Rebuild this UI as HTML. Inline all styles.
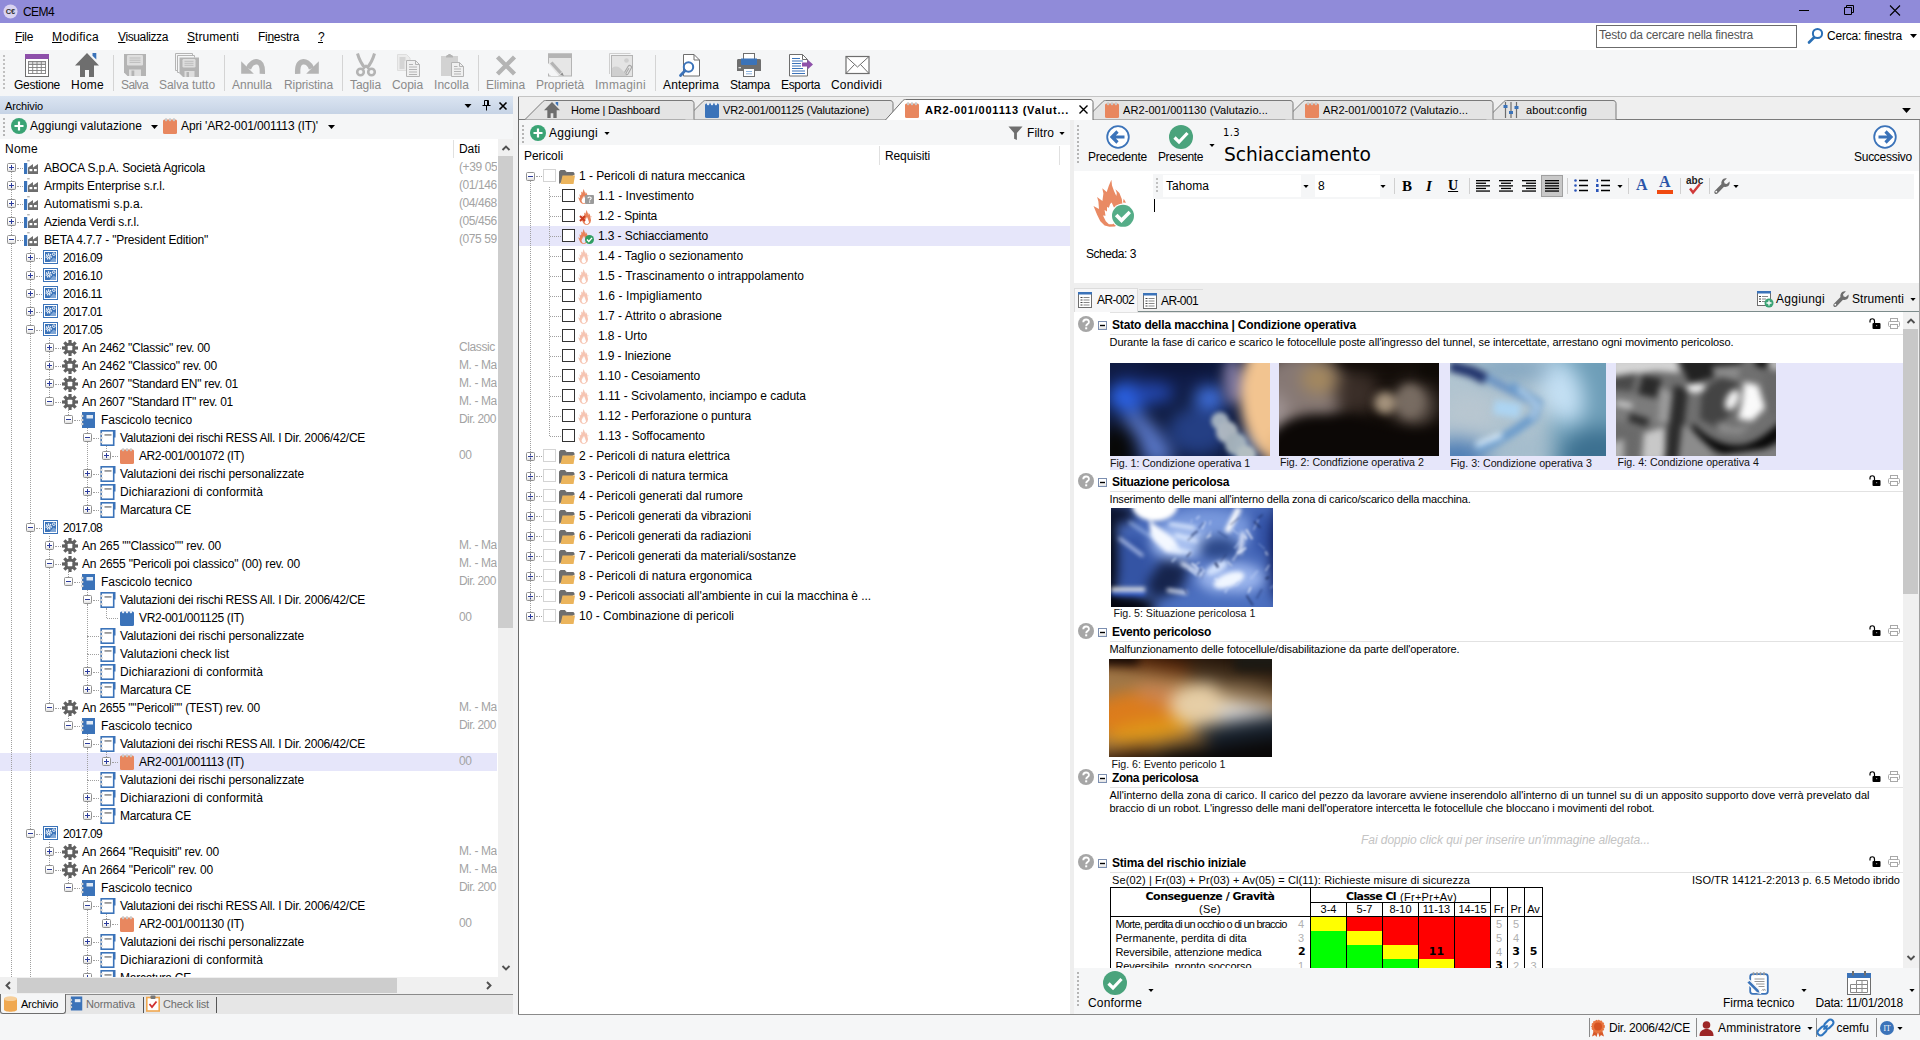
<!DOCTYPE html>
<html lang="it"><head><meta charset="utf-8"><title>CEM4</title><style>
html,body{margin:0;padding:0;}
body{width:1920px;height:1040px;overflow:hidden;background:#f5f6f7;font-family:"Liberation Sans",sans-serif;font-size:12px;color:#000;position:relative;}
.t{position:absolute;white-space:nowrap;overflow:visible;}
.b{position:absolute;}
svg{position:absolute;overflow:visible;}
u{text-decoration:underline;}
</style></head><body>
<svg width="0" height="0" style="position:absolute"><defs><filter id="bl1" x="-50%" y="-50%" width="200%" height="200%" color-interpolation-filters="sRGB"><feGaussianBlur stdDeviation="1"/></filter><filter id="bl2" x="-50%" y="-50%" width="200%" height="200%" color-interpolation-filters="sRGB"><feGaussianBlur stdDeviation="2"/></filter><filter id="bl3" x="-50%" y="-50%" width="200%" height="200%" color-interpolation-filters="sRGB"><feGaussianBlur stdDeviation="3"/></filter><filter id="bl4" x="-50%" y="-50%" width="200%" height="200%" color-interpolation-filters="sRGB"><feGaussianBlur stdDeviation="4"/></filter><filter id="bl5" x="-50%" y="-50%" width="200%" height="200%" color-interpolation-filters="sRGB"><feGaussianBlur stdDeviation="5"/></filter><filter id="bl6" x="-50%" y="-50%" width="200%" height="200%" color-interpolation-filters="sRGB"><feGaussianBlur stdDeviation="6"/></filter><filter id="bl8" x="-50%" y="-50%" width="200%" height="200%" color-interpolation-filters="sRGB"><feGaussianBlur stdDeviation="8"/></filter><filter id="bl10" x="-50%" y="-50%" width="200%" height="200%" color-interpolation-filters="sRGB"><feGaussianBlur stdDeviation="10"/></filter><filter id="bl14" x="-50%" y="-50%" width="200%" height="200%" color-interpolation-filters="sRGB"><feGaussianBlur stdDeviation="14"/></filter><linearGradient id="gex" x1="0" y1="0" x2="0" y2="1"><stop offset="0" stop-color="#fff"/><stop offset="0.5" stop-color="#fff"/><stop offset="1" stop-color="#dcdcdc"/></linearGradient><symbol id="plus" viewBox="0 0 9 9"><rect x="0.5" y="0.5" width="8" height="8" rx="1" fill="url(#gex)" stroke="#919191"/><path d="M2 4.5h5M4.5 2v5" stroke="#2b3b9c" stroke-width="1"/></symbol><symbol id="minus" viewBox="0 0 9 9"><rect x="0.5" y="0.5" width="8" height="8" rx="1" fill="url(#gex)" stroke="#919191"/><path d="M2 4.5h5" stroke="#2b3b9c" stroke-width="1"/></symbol><symbol id="factory" viewBox="0 0 16 16"><path d="M3.200 0.800h2.500" stroke="#888" stroke-width="0.900"/><rect x="0" y="3" width="3.200" height="11" fill="#3b73b9"/><path d="M4 14V7.500l5-3.500v3.500l5-3.500V14z" fill="#6e6e6e"/><rect x="5.500" y="9" width="2.800" height="2.200" fill="#fff"/><rect x="10" y="9" width="2.800" height="2.200" fill="#fff"/></symbol><symbol id="gimg" viewBox="0 0 16 16"><rect x="0.500" y="0.500" width="14" height="13" fill="#fff" stroke="#3b73b9"/><rect x="2" y="2" width="11" height="10" fill="#3b73b9"/><circle cx="5.700" cy="6.500" r="2.400" fill="none" stroke="#fff" stroke-width="1.500" stroke-dasharray="1.100 0.800"/><circle cx="5.700" cy="6.500" r="1.500" fill="#fff"/><circle cx="5.700" cy="6.500" r="0.700" fill="#3b73b9"/><circle cx="10.800" cy="4.200" r="1.300" fill="none" stroke="#fff" stroke-width="0.900"/><path d="M6.500 12l4-4.500 2.500 1.500v3z" fill="#7fa6d6"/></symbol><symbol id="gear" viewBox="0 0 16 16"><g fill="#606060"><circle cx="8" cy="8" r="5.600"/><rect x="6.400" y="0" width="3.200" height="4" transform="rotate(0 8 8)"/><rect x="6.400" y="0" width="3.200" height="4" transform="rotate(45 8 8)"/><rect x="6.400" y="0" width="3.200" height="4" transform="rotate(90 8 8)"/><rect x="6.400" y="0" width="3.200" height="4" transform="rotate(135 8 8)"/><rect x="6.400" y="0" width="3.200" height="4" transform="rotate(180 8 8)"/><rect x="6.400" y="0" width="3.200" height="4" transform="rotate(225 8 8)"/><rect x="6.400" y="0" width="3.200" height="4" transform="rotate(270 8 8)"/><rect x="6.400" y="0" width="3.200" height="4" transform="rotate(315 8 8)"/></g><rect x="5.700" y="5.700" width="4.600" height="4.600" rx="0.600" fill="#fff"/></symbol><symbol id="book" viewBox="0 0 16 16"><rect x="1" y="0" width="13" height="16" fill="#3b73b9"/><rect x="5.500" y="3" width="6.500" height="3.500" fill="#dfe9f5"/><circle cx="1.300" cy="4" r="1.100" fill="#fff" stroke="#999" stroke-width="0.500"/><circle cx="1.300" cy="8" r="1.100" fill="#fff" stroke="#999" stroke-width="0.500"/><circle cx="1.300" cy="12" r="1.100" fill="#fff" stroke="#999" stroke-width="0.500"/></symbol><symbol id="nb" viewBox="0 0 16 16"><rect x="1.200" y="0.800" width="12.500" height="14.400" fill="#fff" stroke="#3b73b9" stroke-width="1.600"/><rect x="13.500" y="0" width="2" height="7.500" fill="#3b73b9"/><rect x="4.500" y="4" width="7" height="1.800" fill="#9a9a9a"/><circle cx="1.200" cy="4" r="1.100" fill="#fff" stroke="#999" stroke-width="0.500"/><circle cx="1.200" cy="8" r="1.100" fill="#fff" stroke="#999" stroke-width="0.500"/><circle cx="1.200" cy="12" r="1.100" fill="#fff" stroke="#999" stroke-width="0.500"/></symbol><symbol id="npo" viewBox="0 0 14 16"><rect x="0" y="1.500" width="14" height="14.500" rx="1.500" fill="#e8875f"/><rect x="2" y="0.300" width="2.200" height="3" rx="0.800" fill="#c9c9c9"/><rect x="5.900" y="0.300" width="2.200" height="3" rx="0.800" fill="#c9c9c9"/><rect x="9.800" y="0.300" width="2.200" height="3" rx="0.800" fill="#c9c9c9"/></symbol><symbol id="npb" viewBox="0 0 14 16"><rect x="0" y="1.500" width="14" height="14.500" rx="1.500" fill="#3b73b9"/><rect x="2" y="0.300" width="2.200" height="3" rx="0.800" fill="#e8eef6"/><rect x="5.900" y="0.300" width="2.200" height="3" rx="0.800" fill="#e8eef6"/><rect x="9.800" y="0.300" width="2.200" height="3" rx="0.800" fill="#e8eef6"/></symbol><symbol id="gplus" viewBox="0 0 16 16"><circle cx="8" cy="8" r="8" fill="#3aa374"/><path d="M3.500 8h9M8 3.500v9" stroke="#fff" stroke-width="2.200"/></symbol><symbol id="dd" viewBox="0 0 7 4"><path d="M0 0h7L3.500 4z" fill="#000"/></symbol><symbol id="folder" viewBox="0 0 16 14"><path d="M0.500 13.500V2c0-1 0.500-1.500 1.500-1.500h4l1.500 2h6.500c0.700 0 1 0.400 1 1V5" fill="#6e6e6e" stroke="#6e6e6e"/><path d="M3.500 5.500h12.500l-1.500 8.500h-13z" fill="#ebb45c"/></symbol><symbol id="flame" viewBox="0 0 40 50"><path fill-rule="evenodd" fill="currentColor" d="M21.400 1.700L22 7.500L24 13L26.300 18L26.800 15L25.400 11.200L29.400 14.900L31.800 21L32.500 27L34 34L32 42L25 48.400L19.500 48.700L14.600 47.500L10.300 43.200L7.200 37L3.500 28.100L9 31L8.400 23.500L7.100 18.900L12.400 22.900L13.400 15.500L12.300 10.300L16.700 14L18.900 7.500ZM21.700 24.400L20.100 26L18.900 29.700L17 29L17 33.400L14.600 32L15.500 37.700L13 37.400L15.800 43.200L18.900 46.300L22.600 46.300L28 41L25 32Z"/><path fill="currentColor" d="M33.700 20.700L36 24.700L33 24.400Z"/></symbol><symbol id="bq" viewBox="0 0 9 9"><rect x="0" y="0" width="9" height="9" rx="1" fill="#9a9a9a"/><path d="M3 3.200c0-1.600 3.200-1.600 3.200 0 0 1.200-1.600 1.100-1.600 2.300" stroke="#fff" stroke-width="1.100" fill="none"/><rect x="4" y="6.400" width="1.200" height="1.200" fill="#fff"/></symbol><symbol id="bx" viewBox="0 0 7 7"><path d="M1 1l5 5M6 1l-5 5" stroke="#cc3b1e" stroke-width="2"/></symbol><symbol id="bok" viewBox="0 0 9 9"><circle cx="4.500" cy="4.500" r="4.500" fill="#2f9e62"/><path d="M2 4.600l1.800 1.900 3.200-3.600" stroke="#fff" stroke-width="1.400" fill="none"/></symbol><symbol id="funnel" viewBox="0 0 16 16"><path d="M0.500 1h15l-6 7v7.500l-3-1.500v-6z" fill="#6e6e6e"/></symbol><symbol id="qm" viewBox="0 0 16 16"><circle cx="8" cy="8" r="8" fill="#a6a6a6"/><path d="M5.300 6.200c0-3.600 5.600-3.600 5.600-0.200 0 2.200-2.700 2-2.700 4.200" stroke="#fff" stroke-width="1.900" fill="none"/><rect x="7.200" y="11.300" width="2" height="2" fill="#fff"/></symbol><symbol id="sminus" viewBox="0 0 9 9"><rect x="0.500" y="0.500" width="8" height="8" fill="url(#gex)" stroke="#7b8eb0"/><path d="M2 4.500h5" stroke="#000" stroke-width="1.400"/></symbol><symbol id="lock" viewBox="0 0 12 11"><path d="M1 4.500V3c0-3 4.500-3 4.500 0v2.500" stroke="#000" stroke-width="1.200" fill="none"/><rect x="3.500" y="5" width="8" height="6" rx="1" fill="#000"/><rect x="7" y="7" width="1.200" height="1.200" fill="#888"/></symbol><symbol id="prn" viewBox="0 0 12 11"><rect x="2.500" y="0.500" width="7" height="3" fill="#fff" stroke="#a8a8a8"/><rect x="0.500" y="3.500" width="11" height="5" rx="1" fill="#fff" stroke="#a8a8a8"/><rect x="2.500" y="6.500" width="7" height="4" fill="#fff" stroke="#a8a8a8"/></symbol><symbol id="tabic" viewBox="0 0 14 16"><rect x="0.500" y="0.500" width="13" height="15" fill="#fff" stroke="#6e6e6e"/><rect x="0" y="0" width="14" height="2.500" fill="#3b73b9"/><path d="M2.500 5.500h2M2.500 8h2M2.500 10.500h2M2.500 13h2" stroke="#444" stroke-width="1.200"/><path d="M5.500 5.500h6M5.500 8h6M5.500 10.500h6M5.500 13h6" stroke="#888" stroke-width="1.200"/></symbol><symbol id="wrench" viewBox="0 0 16 16"><path d="M15.500 3.500c0.500 2-0.300 4-2.300 5-1 0.500-2.200 0.500-3.200 0.200L3.500 15.500c-0.800 0.700-2 0.700-2.700-0.100-0.700-0.800-0.600-1.900 0.100-2.600L7.500 6c-0.400-1.200-0.200-2.500 0.500-3.600C9 0.800 11 0 12.800 0.500L10 3.300l0.600 2.200 2.200 0.600z" fill="#6e6e6e"/><circle cx="2.300" cy="13.700" r="0.900" fill="#fff"/></symbol><symbol id="chk24" viewBox="0 0 24 24"><circle cx="12" cy="12" r="12" fill="#4aa37c"/><path d="M5.500 12.500l4.500 4.500 8.500-9" stroke="#fff" stroke-width="3.200" fill="none"/></symbol><symbol id="prev" viewBox="0 0 24 24"><circle cx="12" cy="12" r="10.800" fill="#fff" stroke="#3b73b9" stroke-width="1.800"/><path d="M18.500 12H7M11.500 6.500L6 12l5.500 5.500" stroke="#3b73b9" stroke-width="3.200" fill="none"/></symbol><symbol id="next" viewBox="0 0 24 24"><circle cx="12" cy="12" r="10.800" fill="#fff" stroke="#3b73b9" stroke-width="1.800"/><path d="M5.500 12H17M12.500 6.500L18 12l-5.500 5.500" stroke="#3b73b9" stroke-width="3.200" fill="none"/></symbol></defs></svg>
<div class="b" style="left:0px;top:0px;width:1920px;height:23px;background:#908bd9;"></div>
<svg style="left:3px;top:4px" width="15" height="15" viewBox="0 0 16 16"><circle cx="8" cy="8" r="7.5" fill="#d9d3f0"/><text x="8" y="11" font-size="8" font-weight="bold" text-anchor="middle" fill="#333" font-family="Liberation Sans, sans-serif">C€</text></svg>
<div class="t" style="left:23px;top:4px;height:16px;line-height:16px;font-size:12px;color:#000;letter-spacing:-0.585px;">CEM4</div>
<svg style="left:1798px;top:5px" width="110" height="14" viewBox="0 0 110 14"><path d="M1 5.5h10" stroke="#000" stroke-width="1" fill="none"/><path d="M46.5 2.5h7v7h-7zM48.500 2.500v-2h7v7h-2" stroke="#000" fill="none"/><path d="M92 0.5l10 10M102 0.5l-10 10" stroke="#000" stroke-width="1.1" fill="none"/></svg>
<div class="b" style="left:0px;top:23px;width:1920px;height:27px;background:#fff;"></div>
<div class="t" style="left:15px;top:29px;height:17px;line-height:17px;font-size:12px;color:#000;letter-spacing:-0.334px;"><u>F</u>ile</div>
<div class="t" style="left:52px;top:29px;height:17px;line-height:17px;font-size:12px;color:#000;letter-spacing:0.290px;"><u>M</u>odifica</div>
<div class="t" style="left:118px;top:29px;height:17px;line-height:17px;font-size:12px;color:#000;letter-spacing:-0.381px;"><u>V</u>isualizza</div>
<div class="t" style="left:187px;top:29px;height:17px;line-height:17px;font-size:12px;color:#000;letter-spacing:0.072px;"><u>S</u>trumenti</div>
<div class="t" style="left:258px;top:29px;height:17px;line-height:17px;font-size:12px;color:#000;letter-spacing:-0.293px;">Fi<u>n</u>estra</div>
<div class="t" style="left:318px;top:29px;height:17px;line-height:17px;font-size:12px;color:#000;letter-spacing:-1.674px;"><u>?</u></div>
<div class="b" style="left:1596px;top:25px;width:199px;height:21px;background:#fff;border:1px solid #6b6b6b;"></div>
<div class="t" style="left:1599px;top:27px;height:16px;line-height:16px;font-size:12px;color:#555;letter-spacing:-0.196px;">Testo da cercare nella finestra</div>
<svg style="left:1807px;top:27px" width="18" height="18" viewBox="0 0 18 18"><circle cx="10.5" cy="6.5" r="4.6" fill="none" stroke="#2a6fb5" stroke-width="2"/><path d="M7 10.5L2 15.5" stroke="#2a6fb5" stroke-width="2.6" stroke-linecap="round"/></svg>
<div class="t" style="left:1827px;top:28px;height:17px;line-height:17px;font-size:12px;color:#000;letter-spacing:-0.202px;">Cerca: finestra</div>
<svg style="left:1910px;top:34px" width="7" height="4" viewBox="0 0 7 4"><path d="M0 0h7L3.5 4z" fill="#000"/></svg>
<div class="b" style="left:0px;top:50px;width:1920px;height:46px;background:#f5f6f7;"></div>
<svg style="left:3px;top:54px" width="3" height="38" viewBox="0 0 3 38"><path d="M1 1v36" stroke="#c0c0c0" stroke-width="2" stroke-dasharray="2 2"/></svg>
<div class="t" style="left:14px;top:77px;height:16px;line-height:16px;font-size:12px;color:#000;letter-spacing:-0.254px;">Gestione</div>
<div class="t" style="left:71px;top:77px;height:16px;line-height:16px;font-size:12px;color:#000;letter-spacing:0.248px;">Home</div>
<div class="t" style="left:121px;top:77px;height:16px;line-height:16px;font-size:12px;color:#8a8a8a;letter-spacing:-0.604px;">Salva</div>
<div class="t" style="left:159px;top:77px;height:16px;line-height:16px;font-size:12px;color:#8a8a8a;letter-spacing:-0.064px;">Salva tutto</div>
<div class="t" style="left:232px;top:77px;height:16px;line-height:16px;font-size:12px;color:#8a8a8a;letter-spacing:-0.005px;">Annulla</div>
<div class="t" style="left:284px;top:77px;height:16px;line-height:16px;font-size:12px;color:#8a8a8a;letter-spacing:-0.102px;">Ripristina</div>
<div class="t" style="left:350px;top:77px;height:16px;line-height:16px;font-size:12px;color:#8a8a8a;letter-spacing:-0.059px;">Taglia</div>
<div class="t" style="left:392px;top:77px;height:16px;line-height:16px;font-size:12px;color:#8a8a8a;letter-spacing:-0.071px;">Copia</div>
<div class="t" style="left:434px;top:77px;height:16px;line-height:16px;font-size:12px;color:#8a8a8a;letter-spacing:0.045px;">Incolla</div>
<div class="t" style="left:486px;top:77px;height:16px;line-height:16px;font-size:12px;color:#8a8a8a;letter-spacing:-0.049px;">Elimina</div>
<div class="t" style="left:536px;top:77px;height:16px;line-height:16px;font-size:12px;color:#8a8a8a;letter-spacing:-0.077px;">Proprietà</div>
<div class="t" style="left:595px;top:77px;height:16px;line-height:16px;font-size:12px;color:#8a8a8a;letter-spacing:0.290px;">Immagini</div>
<div class="t" style="left:663px;top:77px;height:16px;line-height:16px;font-size:12px;color:#000;letter-spacing:0.145px;">Anteprima</div>
<div class="t" style="left:730px;top:77px;height:16px;line-height:16px;font-size:12px;color:#000;letter-spacing:-0.226px;">Stampa</div>
<div class="t" style="left:781px;top:77px;height:16px;line-height:16px;font-size:12px;color:#000;letter-spacing:-0.337px;">Esporta</div>
<div class="t" style="left:831px;top:77px;height:16px;line-height:16px;font-size:12px;color:#000;letter-spacing:0.182px;">Condividi</div>
<svg style="left:25px;top:53px" width="24" height="24" viewBox="0 0 24 24"><rect x="0.500" y="1.500" width="23" height="22" fill="#fff" stroke="#6e6e6e"/><rect x="0" y="1" width="24" height="5" fill="#8e50aa"/><rect x="3" y="8" width="18" height="13" fill="#808080"/><rect x="3.900" y="8.900" width="3.375" height="2.125" fill="#d8d8d8"/><rect x="8.175" y="8.900" width="3.375" height="2.125" fill="#d8d8d8"/><rect x="12.450" y="8.900" width="3.375" height="2.125" fill="#d8d8d8"/><rect x="16.725" y="8.900" width="3.375" height="2.125" fill="#d8d8d8"/><rect x="3.900" y="11.925" width="3.375" height="2.125" fill="#fff"/><rect x="8.175" y="11.925" width="3.375" height="2.125" fill="#fff"/><rect x="12.450" y="11.925" width="3.375" height="2.125" fill="#fff"/><rect x="16.725" y="11.925" width="3.375" height="2.125" fill="#fff"/><rect x="3.900" y="14.950" width="3.375" height="2.125" fill="#fff"/><rect x="8.175" y="14.950" width="3.375" height="2.125" fill="#fff"/><rect x="12.450" y="14.950" width="3.375" height="2.125" fill="#fff"/><rect x="16.725" y="14.950" width="3.375" height="2.125" fill="#fff"/><rect x="3.900" y="17.975" width="3.375" height="2.125" fill="#fff"/><rect x="8.175" y="17.975" width="3.375" height="2.125" fill="#fff"/><rect x="12.450" y="17.975" width="3.375" height="2.125" fill="#fff"/><rect x="16.725" y="17.975" width="3.375" height="2.125" fill="#fff"/></svg>
<svg style="left:75px;top:53px" width="24" height="24" viewBox="0 0 24 24"><path d="M17.5 0h3.8v6.5l-3.8-3.8z" fill="#3b73b9"/><path d="M12 0L0 12.5h5V24h5v-7h4v7h5V12.5h5z" fill="#6e6e6e"/></svg>
<svg style="left:123px;top:53px" width="24" height="24" viewBox="0 0 24 24"><path d="M1 1h22v22H4.5L1 19.5z" fill="#b4b4b4"/><rect x="4" y="2" width="16" height="10.5" rx="1.2" fill="#dedede"/><path d="M6.5 5h11M6.5 7.2h11M6.5 9.4h11" stroke="#b4b4b4" stroke-width="0.8"/><rect x="6" y="16.5" width="12" height="6.5" fill="#dedede"/><rect x="8.5" y="17.5" width="2.8" height="5.5" fill="#b4b4b4"/></svg>
<svg style="left:175px;top:53px" width="24" height="24" viewBox="0 0 24 24"><path d="M0.5 0.5h17v2M2.5 2.5h17v2" fill="none" stroke="#b4b4b4" stroke-width="1"/><path d="M0.5 0.5v17h2M2.5 2.5v17h2" fill="none" stroke="#b4b4b4" stroke-width="1"/><path d="M4.5 4.5h19.5v19.5H8L4.5 20.5z" fill="#b4b4b4"/><rect x="7.5" y="6" width="13" height="8.5" rx="1.2" fill="#dedede"/><path d="M9.5 8.3h9M9.5 10.3h9M9.5 12.3h9" stroke="#b4b4b4" stroke-width="0.8"/><rect x="9.5" y="18" width="10" height="6" fill="#dedede"/><rect x="11.5" y="19" width="2.5" height="5" fill="#b4b4b4"/></svg>
<svg style="left:240px;top:53px" width="24" height="24" viewBox="0 0 24 24"><path d="M1.200 8.200v12.600h12.600z" fill="#b4b4b4"/><path d="M8.500 15.500C10.500 10 14.500 8.300 17.500 8.800c3.600 0.600 5.200 4.600 4.800 12" stroke="#b4b4b4" stroke-width="5.400" fill="none"/></svg>
<svg style="left:296px;top:53px" width="24" height="24" viewBox="0 0 24 24"><g transform="translate(24 0) scale(-1 1)"><path d="M1.200 8.200v12.600h12.600z" fill="#b4b4b4"/><path d="M8.500 15.500C10.500 10 14.500 8.300 17.500 8.800c3.600 0.600 5.200 4.600 4.800 12" stroke="#b4b4b4" stroke-width="5.400" fill="none"/></g></svg>
<svg style="left:354px;top:53px" width="24" height="24" viewBox="0 0 24 24"><path d="M3.5 0.500C5 6 8 11.500 11 15M20.500 0.500C19 6 16 11.500 13 15" stroke="#b4b4b4" stroke-width="3" fill="none"/><circle cx="6.500" cy="19" r="3.300" fill="none" stroke="#b4b4b4" stroke-width="2.600"/><circle cx="17.500" cy="19" r="3.300" fill="none" stroke="#b4b4b4" stroke-width="2.600"/><path d="M8.500 16.500L12 13l3.500 3.500" stroke="#b4b4b4" stroke-width="2.400" fill="none"/></svg>
<svg style="left:396px;top:53px" width="24" height="24" viewBox="0 0 24 24"><path d="M1.500 1.500h9l3.500 3.500v12.500h-12.500z" fill="#ececec" stroke="#dedede"/><path d="M3.500 5h6M3.500 7h6M3.500 9h5M3.500 11h5M3.500 13h5M3.500 15h5" stroke="#b4b4b4" stroke-width="0.800"/><path d="M10.500 7.500h9l4 4v12h-13z" fill="#f0f0f0" stroke="#b4b4b4"/><path d="M19.500 7.500v4h4" fill="none" stroke="#b4b4b4"/><path d="M13 11.500h4M13 14h8M13 16.500h8M13 19h8M13 21.500h8" stroke="#b4b4b4" stroke-width="1"/></svg>
<svg style="left:440px;top:53px" width="24" height="24" viewBox="0 0 24 24"><path d="M1 3h17v20H1z" fill="#d2d2d2"/><path d="M6 3.500c0-1 1-1.500 2-1.500 0-1.200 3-1.200 3 0 1 0 2 0.500 2 1.500v1H6z" fill="#b4b4b4"/><path d="M11.500 9.500h8l4 4v10h-12z" fill="#f0f0f0" stroke="#b4b4b4"/><path d="M19.500 9.500v4h4" fill="none" stroke="#b4b4b4"/><path d="M14 13.500h3.500M14 16h7M14 18.500h7M14 21h7" stroke="#b4b4b4" stroke-width="1"/></svg>
<svg style="left:494px;top:53px" width="24" height="24" viewBox="0 0 24 24"><path d="M3.500 4l17 17M20.500 4L3.500 21" stroke="#b4b4b4" stroke-width="4.400"/></svg>
<svg style="left:548px;top:53px" width="24" height="24" viewBox="0 0 24 24"><rect x="0.500" y="1" width="23" height="22" fill="#e6e6e6" stroke="#b4b4b4"/><rect x="0" y="0.500" width="24" height="4.500" fill="#b4b4b4"/><path d="M0 10l11 13H3l-3-3z" fill="#f5f6f7"/><path d="M2 10.500l2.500-2 9.500 10.500-2.500 2z" fill="#b4b4b4"/><path d="M12 21.500l2.500-2 1.300 3.600z" fill="#8c8c8c"/></svg>
<svg style="left:609px;top:53px" width="24" height="24" viewBox="0 0 24 24"><path d="M0.500 21v-20.500h21" fill="none" stroke="#cfcfcf"/><rect x="2.500" y="2.500" width="21" height="21" fill="#e4e4e4" stroke="#b4b4b4"/><circle cx="17.500" cy="7.500" r="2.300" fill="#cfcfcf"/><path d="M3 15c4-3 8-1 11 3 2 2 4 3 4 5H3z" fill="#cfcfcf"/><path d="M15.500 19.500l3.500-6c1.500-2.300 4.500-0.500 3.200 1.800l-3.200 5.700c-0.800 1.200-2.600 0.300-1.900-1l2.800-4.800" fill="none" stroke="#a8a8a8" stroke-width="1.100"/></svg>
<svg style="left:679px;top:53px" width="24" height="24" viewBox="0 0 24 24"><path d="M4.500 1.500h10.500l5.500 5.500v16h-16z" fill="#fff" stroke="#6e6e6e"/><path d="M15 1.500v5.500h5.500" fill="none" stroke="#6e6e6e"/><circle cx="9.500" cy="14" r="4.700" fill="#fff" stroke="#3b73b9" stroke-width="2"/><path d="M6 17.800L1.500 22.500" stroke="#3b73b9" stroke-width="2.800" stroke-linecap="round"/></svg>
<svg style="left:737px;top:53px" width="24" height="24" viewBox="0 0 24 24"><rect x="6.500" y="0.500" width="11" height="6" fill="#fff" stroke="#6e6e6e"/><path d="M0 7.500c0-1 0.500-1.500 1.500-1.500h21c1 0 1.500 0.500 1.500 1.500V18H0z" fill="#6e6e6e"/><path d="M4 5.500h16v5c0 1-0.500 1.500-1.500 1.500h-13c-1 0-1.500-0.500-1.500-1.500z" fill="#3b73b9"/><rect x="1.500" y="14" width="2.500" height="1.300" fill="#ddd"/><rect x="6.500" y="15.500" width="11" height="8" fill="#fff" stroke="#6e6e6e"/><path d="M9 18.500h6M9 20.800h6" stroke="#8db3dd" stroke-width="1"/></svg>
<svg style="left:789px;top:53px" width="24" height="24" viewBox="0 0 24 24"><path d="M0.500 1.500h13l5 5v16.500h-18z" fill="#fff" stroke="#6e6e6e"/><path d="M13.500 1.500v5h5" fill="none" stroke="#6e6e6e"/><path d="M3 5.500h8M3 8h11M3 10.500h9M3 13h9M3 15.500h11M3 18h13M3 20.500h13" stroke="#3b73b9" stroke-width="1.100"/><path d="M13 9.500h5.500V6.500L24 11.500l-5.500 5V13.500H13z" fill="#8e50aa"/></svg>
<svg style="left:845px;top:53px" width="24" height="24" viewBox="0 0 24 24"><rect x="1" y="3.500" width="23" height="17" fill="#fff" stroke="#6e6e6e" stroke-width="1.200"/><path d="M1 3.500l11.500 10.500L24 3.500M1 20.500l8.500-9M24 20.500l-8.500-9" fill="none" stroke="#6e6e6e" stroke-width="1"/></svg>
<div class="b" style="left:113px;top:55px;width:1px;height:36px;background:#d4d4d4;"></div>
<div class="b" style="left:224px;top:55px;width:1px;height:36px;background:#d4d4d4;"></div>
<div class="b" style="left:342px;top:55px;width:1px;height:36px;background:#d4d4d4;"></div>
<div class="b" style="left:478px;top:55px;width:1px;height:36px;background:#d4d4d4;"></div>
<div class="b" style="left:655px;top:55px;width:1px;height:36px;background:#d4d4d4;"></div>
<div class="b" style="left:0px;top:96px;width:513px;height:919px;background:#fff;"></div>
<div class="b" style="left:0px;top:96px;width:513px;height:18px;background:linear-gradient(#dbe5f2,#c6d3e5);"></div>
<div class="t" style="left:5px;top:98px;height:16px;line-height:16px;font-size:11px;color:#000;letter-spacing:-0.140px;">Archivio</div>
<svg style="left:464px;top:104px" width="8" height="4"><use href="#dd"/></svg>
<svg style="left:482px;top:100px" width="9" height="11" viewBox="0 0 9 11"><path d="M2.500 0.500h4v5h-4zM5.500 0.500v5M0.500 5.500h8M4.500 5.500v5" stroke="#000" fill="none"/></svg>
<svg style="left:499px;top:102px" width="8" height="8" viewBox="0 0 8 8"><path d="M0.500 0.500l7 7M7.500 0.500l-7 7" stroke="#000" stroke-width="1.600" fill="none"/></svg>
<div class="b" style="left:0px;top:114px;width:513px;height:25px;background:#f5f6f7;"></div>
<svg style="left:3px;top:118px" width="2" height="18" viewBox="0 0 2 18"><path d="M1 0v18" stroke="#b5b5b5" stroke-width="2" stroke-dasharray="2 2"/></svg>
<svg style="left:11px;top:118px" width="16" height="16"><use href="#gplus"/></svg>
<div class="t" style="left:30px;top:118px;height:17px;line-height:17px;font-size:12px;color:#000;letter-spacing:0.063px;">Aggiungi valutazione</div>
<svg style="left:151px;top:125px" width="7" height="4"><use href="#dd"/></svg>
<svg style="left:163px;top:118px" width="14" height="16"><use href="#npo"/></svg>
<div class="t" style="left:181px;top:118px;height:17px;line-height:17px;font-size:12px;color:#000;letter-spacing:-0.123px;">Apri 'AR2-001/001113 (IT)'</div>
<svg style="left:328px;top:125px" width="7" height="4"><use href="#dd"/></svg>
<div class="t" style="left:5px;top:141px;height:17px;line-height:17px;font-size:12px;color:#000;letter-spacing:0.248px;">Nome</div>
<div class="b" style="left:453px;top:140px;width:1px;height:18px;background:#e0e0e0;"></div>
<div class="t" style="left:459px;top:141px;height:17px;line-height:17px;font-size:12px;color:#000;letter-spacing:-0.085px;">Dati</div>
<div class="b" style="left:0;top:159px;width:497px;height:818px;overflow:hidden;"><div class="b" style="left:17px;top:9px;width:6px;height:1px;border-top:1px dotted #a0a0a0;"></div><svg style="left:7px;top:4px" width="9" height="9"><use href="#plus"/></svg><svg style="left:24px;top:1px" width="16" height="16"><use href="#factory"/></svg><div class="t" style="left:44px;top:0px;height:18px;line-height:18px;font-size:12px;color:#000;letter-spacing:-0.198px;">ABOCA S.p.A. Società Agricola</div><div class="t" style="left:459px;top:-1px;height:18px;line-height:18px;font-size:12px;color:#a3a3a3;letter-spacing:-0.410px;">(+39 05</div><div class="b" style="left:17px;top:27px;width:6px;height:1px;border-top:1px dotted #a0a0a0;"></div><svg style="left:7px;top:22px" width="9" height="9"><use href="#plus"/></svg><svg style="left:24px;top:19px" width="16" height="16"><use href="#factory"/></svg><div class="t" style="left:44px;top:18px;height:18px;line-height:18px;font-size:12px;color:#000;letter-spacing:-0.121px;">Armpits Enterprise s.r.l.</div><div class="t" style="left:459px;top:17px;height:18px;line-height:18px;font-size:12px;color:#a3a3a3;letter-spacing:-0.407px;">(01/146</div><div class="b" style="left:17px;top:45px;width:6px;height:1px;border-top:1px dotted #a0a0a0;"></div><svg style="left:7px;top:40px" width="9" height="9"><use href="#plus"/></svg><svg style="left:24px;top:37px" width="16" height="16"><use href="#factory"/></svg><div class="t" style="left:44px;top:36px;height:18px;line-height:18px;font-size:12px;color:#000;letter-spacing:0.017px;">Automatismi s.p.a.</div><div class="t" style="left:459px;top:35px;height:18px;line-height:18px;font-size:12px;color:#a3a3a3;letter-spacing:-0.407px;">(04/468</div><div class="b" style="left:17px;top:63px;width:6px;height:1px;border-top:1px dotted #a0a0a0;"></div><svg style="left:7px;top:58px" width="9" height="9"><use href="#plus"/></svg><svg style="left:24px;top:55px" width="16" height="16"><use href="#factory"/></svg><div class="t" style="left:44px;top:54px;height:18px;line-height:18px;font-size:12px;color:#000;letter-spacing:-0.219px;">Azienda Verdi s.r.l.</div><div class="t" style="left:459px;top:53px;height:18px;line-height:18px;font-size:12px;color:#a3a3a3;letter-spacing:-0.407px;">(05/456</div><div class="b" style="left:17px;top:81px;width:6px;height:1px;border-top:1px dotted #a0a0a0;"></div><svg style="left:7px;top:76px" width="9" height="9"><use href="#minus"/></svg><svg style="left:24px;top:73px" width="16" height="16"><use href="#factory"/></svg><div class="t" style="left:44px;top:72px;height:18px;line-height:18px;font-size:12px;color:#000;letter-spacing:-0.179px;">BETA 4.7.7 - "President Edition"</div><div class="t" style="left:459px;top:71px;height:18px;line-height:18px;font-size:12px;color:#a3a3a3;letter-spacing:-0.415px;">(075 599</div><div class="b" style="left:36px;top:99px;width:6px;height:1px;border-top:1px dotted #a0a0a0;"></div><svg style="left:26px;top:94px" width="9" height="9"><use href="#plus"/></svg><svg style="left:43px;top:91px" width="16" height="16"><use href="#gimg"/></svg><div class="t" style="left:63px;top:90px;height:18px;line-height:18px;font-size:12px;color:#000;letter-spacing:-0.625px;">2016.09</div><div class="b" style="left:36px;top:117px;width:6px;height:1px;border-top:1px dotted #a0a0a0;"></div><svg style="left:26px;top:112px" width="9" height="9"><use href="#plus"/></svg><svg style="left:43px;top:109px" width="16" height="16"><use href="#gimg"/></svg><div class="t" style="left:63px;top:108px;height:18px;line-height:18px;font-size:12px;color:#000;letter-spacing:-0.625px;">2016.10</div><div class="b" style="left:36px;top:135px;width:6px;height:1px;border-top:1px dotted #a0a0a0;"></div><svg style="left:26px;top:130px" width="9" height="9"><use href="#plus"/></svg><svg style="left:43px;top:127px" width="16" height="16"><use href="#gimg"/></svg><div class="t" style="left:63px;top:126px;height:18px;line-height:18px;font-size:12px;color:#000;letter-spacing:-0.498px;">2016.11</div><div class="b" style="left:36px;top:153px;width:6px;height:1px;border-top:1px dotted #a0a0a0;"></div><svg style="left:26px;top:148px" width="9" height="9"><use href="#plus"/></svg><svg style="left:43px;top:145px" width="16" height="16"><use href="#gimg"/></svg><div class="t" style="left:63px;top:144px;height:18px;line-height:18px;font-size:12px;color:#000;letter-spacing:-0.625px;">2017.01</div><div class="b" style="left:36px;top:171px;width:6px;height:1px;border-top:1px dotted #a0a0a0;"></div><svg style="left:26px;top:166px" width="9" height="9"><use href="#minus"/></svg><svg style="left:43px;top:163px" width="16" height="16"><use href="#gimg"/></svg><div class="t" style="left:63px;top:162px;height:18px;line-height:18px;font-size:12px;color:#000;letter-spacing:-0.625px;">2017.05</div><div class="b" style="left:55px;top:189px;width:6px;height:1px;border-top:1px dotted #a0a0a0;"></div><svg style="left:45px;top:184px" width="9" height="9"><use href="#plus"/></svg><svg style="left:62px;top:181px" width="16" height="16"><use href="#gear"/></svg><div class="t" style="left:82px;top:180px;height:18px;line-height:18px;font-size:12px;color:#000;letter-spacing:-0.254px;">An 2462 "Classic" rev. 00</div><div class="t" style="left:459px;top:179px;height:18px;line-height:18px;font-size:12px;color:#a3a3a3;letter-spacing:-0.387px;">Classic</div><div class="b" style="left:55px;top:207px;width:6px;height:1px;border-top:1px dotted #a0a0a0;"></div><svg style="left:45px;top:202px" width="9" height="9"><use href="#plus"/></svg><svg style="left:62px;top:199px" width="16" height="16"><use href="#gear"/></svg><div class="t" style="left:82px;top:198px;height:18px;line-height:18px;font-size:12px;color:#000;letter-spacing:-0.232px;">An 2462 "Classico" rev. 00</div><div class="t" style="left:459px;top:197px;height:18px;line-height:18px;font-size:12px;color:#a3a3a3;letter-spacing:-0.407px;">M. - Ma</div><div class="b" style="left:55px;top:225px;width:6px;height:1px;border-top:1px dotted #a0a0a0;"></div><svg style="left:45px;top:220px" width="9" height="9"><use href="#plus"/></svg><svg style="left:62px;top:217px" width="16" height="16"><use href="#gear"/></svg><div class="t" style="left:82px;top:216px;height:18px;line-height:18px;font-size:12px;color:#000;letter-spacing:-0.290px;">An 2607 "Standard EN" rev. 01</div><div class="t" style="left:459px;top:215px;height:18px;line-height:18px;font-size:12px;color:#a3a3a3;letter-spacing:-0.407px;">M. - Ma</div><div class="b" style="left:55px;top:243px;width:6px;height:1px;border-top:1px dotted #a0a0a0;"></div><svg style="left:45px;top:238px" width="9" height="9"><use href="#minus"/></svg><svg style="left:62px;top:235px" width="16" height="16"><use href="#gear"/></svg><div class="t" style="left:82px;top:234px;height:18px;line-height:18px;font-size:12px;color:#000;letter-spacing:-0.255px;">An 2607 "Standard IT" rev. 01</div><div class="t" style="left:459px;top:233px;height:18px;line-height:18px;font-size:12px;color:#a3a3a3;letter-spacing:-0.407px;">M. - Ma</div><div class="b" style="left:74px;top:261px;width:6px;height:1px;border-top:1px dotted #a0a0a0;"></div><svg style="left:64px;top:256px" width="9" height="9"><use href="#minus"/></svg><svg style="left:81px;top:253px" width="16" height="16"><use href="#book"/></svg><div class="t" style="left:101px;top:252px;height:18px;line-height:18px;font-size:12px;color:#000;letter-spacing:-0.061px;">Fascicolo tecnico</div><div class="t" style="left:459px;top:251px;height:18px;line-height:18px;font-size:12px;color:#a3a3a3;letter-spacing:-0.569px;">Dir. 200</div><div class="b" style="left:93px;top:279px;width:6px;height:1px;border-top:1px dotted #a0a0a0;"></div><svg style="left:83px;top:274px" width="9" height="9"><use href="#minus"/></svg><svg style="left:100px;top:271px" width="16" height="16"><use href="#nb"/></svg><div class="t" style="left:120px;top:270px;height:18px;line-height:18px;font-size:12px;color:#000;letter-spacing:-0.271px;">Valutazioni dei rischi RESS All. I Dir. 2006/42/CE</div><div class="b" style="left:112px;top:297px;width:6px;height:1px;border-top:1px dotted #a0a0a0;"></div><svg style="left:102px;top:292px" width="9" height="9"><use href="#plus"/></svg><svg style="left:120px;top:289px" width="14" height="16"><use href="#npo"/></svg><div class="t" style="left:139px;top:288px;height:18px;line-height:18px;font-size:12px;color:#000;letter-spacing:-0.407px;">AR2-001/001072 (IT)</div><div class="t" style="left:459px;top:287px;height:18px;line-height:18px;font-size:12px;color:#a3a3a3;letter-spacing:-0.467px;">00</div><div class="b" style="left:93px;top:315px;width:6px;height:1px;border-top:1px dotted #a0a0a0;"></div><svg style="left:83px;top:310px" width="9" height="9"><use href="#plus"/></svg><svg style="left:100px;top:307px" width="16" height="16"><use href="#nb"/></svg><div class="t" style="left:120px;top:306px;height:18px;line-height:18px;font-size:12px;color:#000;letter-spacing:-0.141px;">Valutazioni dei rischi personalizzate</div><div class="b" style="left:93px;top:333px;width:6px;height:1px;border-top:1px dotted #a0a0a0;"></div><svg style="left:83px;top:328px" width="9" height="9"><use href="#plus"/></svg><svg style="left:100px;top:325px" width="16" height="16"><use href="#nb"/></svg><div class="t" style="left:120px;top:324px;height:18px;line-height:18px;font-size:12px;color:#000;letter-spacing:0.084px;">Dichiarazioni di conformità</div><div class="b" style="left:93px;top:351px;width:6px;height:1px;border-top:1px dotted #a0a0a0;"></div><svg style="left:83px;top:346px" width="9" height="9"><use href="#plus"/></svg><svg style="left:100px;top:343px" width="16" height="16"><use href="#nb"/></svg><div class="t" style="left:120px;top:342px;height:18px;line-height:18px;font-size:12px;color:#000;letter-spacing:-0.252px;">Marcatura CE</div><div class="b" style="left:36px;top:369px;width:6px;height:1px;border-top:1px dotted #a0a0a0;"></div><svg style="left:26px;top:364px" width="9" height="9"><use href="#minus"/></svg><svg style="left:43px;top:361px" width="16" height="16"><use href="#gimg"/></svg><div class="t" style="left:63px;top:360px;height:18px;line-height:18px;font-size:12px;color:#000;letter-spacing:-0.625px;">2017.08</div><div class="b" style="left:55px;top:387px;width:6px;height:1px;border-top:1px dotted #a0a0a0;"></div><svg style="left:45px;top:382px" width="9" height="9"><use href="#plus"/></svg><svg style="left:62px;top:379px" width="16" height="16"><use href="#gear"/></svg><div class="t" style="left:82px;top:378px;height:18px;line-height:18px;font-size:12px;color:#000;letter-spacing:-0.144px;">An 265 ""Classico"" rev. 00</div><div class="t" style="left:459px;top:377px;height:18px;line-height:18px;font-size:12px;color:#a3a3a3;letter-spacing:-0.407px;">M. - Ma</div><div class="b" style="left:55px;top:405px;width:6px;height:1px;border-top:1px dotted #a0a0a0;"></div><svg style="left:45px;top:400px" width="9" height="9"><use href="#minus"/></svg><svg style="left:62px;top:397px" width="16" height="16"><use href="#gear"/></svg><div class="t" style="left:82px;top:396px;height:18px;line-height:18px;font-size:12px;color:#000;letter-spacing:-0.161px;">An 2655 "Pericoli poi classico" (00) rev. 00</div><div class="t" style="left:459px;top:395px;height:18px;line-height:18px;font-size:12px;color:#a3a3a3;letter-spacing:-0.407px;">M. - Ma</div><div class="b" style="left:74px;top:423px;width:6px;height:1px;border-top:1px dotted #a0a0a0;"></div><svg style="left:64px;top:418px" width="9" height="9"><use href="#minus"/></svg><svg style="left:81px;top:415px" width="16" height="16"><use href="#book"/></svg><div class="t" style="left:101px;top:414px;height:18px;line-height:18px;font-size:12px;color:#000;letter-spacing:-0.061px;">Fascicolo tecnico</div><div class="t" style="left:459px;top:413px;height:18px;line-height:18px;font-size:12px;color:#a3a3a3;letter-spacing:-0.569px;">Dir. 200</div><div class="b" style="left:93px;top:441px;width:6px;height:1px;border-top:1px dotted #a0a0a0;"></div><svg style="left:83px;top:436px" width="9" height="9"><use href="#minus"/></svg><svg style="left:100px;top:433px" width="16" height="16"><use href="#nb"/></svg><div class="t" style="left:120px;top:432px;height:18px;line-height:18px;font-size:12px;color:#000;letter-spacing:-0.271px;">Valutazioni dei rischi RESS All. I Dir. 2006/42/CE</div><div class="b" style="left:107px;top:459px;width:11px;height:1px;border-top:1px dotted #a0a0a0;"></div><svg style="left:120px;top:451px" width="14" height="16"><use href="#npb"/></svg><div class="t" style="left:139px;top:450px;height:18px;line-height:18px;font-size:12px;color:#000;letter-spacing:-0.360px;">VR2-001/001125 (IT)</div><div class="t" style="left:459px;top:449px;height:18px;line-height:18px;font-size:12px;color:#a3a3a3;letter-spacing:-0.467px;">00</div><div class="b" style="left:88px;top:477px;width:11px;height:1px;border-top:1px dotted #a0a0a0;"></div><svg style="left:100px;top:469px" width="16" height="16"><use href="#nb"/></svg><div class="t" style="left:120px;top:468px;height:18px;line-height:18px;font-size:12px;color:#000;letter-spacing:-0.141px;">Valutazioni dei rischi personalizzate</div><div class="b" style="left:88px;top:495px;width:11px;height:1px;border-top:1px dotted #a0a0a0;"></div><svg style="left:100px;top:487px" width="16" height="16"><use href="#nb"/></svg><div class="t" style="left:120px;top:486px;height:18px;line-height:18px;font-size:12px;color:#000;letter-spacing:-0.068px;">Valutazioni check list</div><div class="b" style="left:93px;top:513px;width:6px;height:1px;border-top:1px dotted #a0a0a0;"></div><svg style="left:83px;top:508px" width="9" height="9"><use href="#plus"/></svg><svg style="left:100px;top:505px" width="16" height="16"><use href="#nb"/></svg><div class="t" style="left:120px;top:504px;height:18px;line-height:18px;font-size:12px;color:#000;letter-spacing:0.084px;">Dichiarazioni di conformità</div><div class="b" style="left:93px;top:531px;width:6px;height:1px;border-top:1px dotted #a0a0a0;"></div><svg style="left:83px;top:526px" width="9" height="9"><use href="#plus"/></svg><svg style="left:100px;top:523px" width="16" height="16"><use href="#nb"/></svg><div class="t" style="left:120px;top:522px;height:18px;line-height:18px;font-size:12px;color:#000;letter-spacing:-0.252px;">Marcatura CE</div><div class="b" style="left:55px;top:549px;width:6px;height:1px;border-top:1px dotted #a0a0a0;"></div><svg style="left:45px;top:544px" width="9" height="9"><use href="#minus"/></svg><svg style="left:62px;top:541px" width="16" height="16"><use href="#gear"/></svg><div class="t" style="left:82px;top:540px;height:18px;line-height:18px;font-size:12px;color:#000;letter-spacing:-0.216px;">An 2655 ""Pericoli"" (TEST) rev. 00</div><div class="t" style="left:459px;top:539px;height:18px;line-height:18px;font-size:12px;color:#a3a3a3;letter-spacing:-0.407px;">M. - Ma</div><div class="b" style="left:74px;top:567px;width:6px;height:1px;border-top:1px dotted #a0a0a0;"></div><svg style="left:64px;top:562px" width="9" height="9"><use href="#minus"/></svg><svg style="left:81px;top:559px" width="16" height="16"><use href="#book"/></svg><div class="t" style="left:101px;top:558px;height:18px;line-height:18px;font-size:12px;color:#000;letter-spacing:-0.061px;">Fascicolo tecnico</div><div class="t" style="left:459px;top:557px;height:18px;line-height:18px;font-size:12px;color:#a3a3a3;letter-spacing:-0.569px;">Dir. 200</div><div class="b" style="left:93px;top:585px;width:6px;height:1px;border-top:1px dotted #a0a0a0;"></div><svg style="left:83px;top:580px" width="9" height="9"><use href="#minus"/></svg><svg style="left:100px;top:577px" width="16" height="16"><use href="#nb"/></svg><div class="t" style="left:120px;top:576px;height:18px;line-height:18px;font-size:12px;color:#000;letter-spacing:-0.271px;">Valutazioni dei rischi RESS All. I Dir. 2006/42/CE</div><div class="b" style="left:0px;top:594px;width:497px;height:18px;background:#e6e6fa;"></div><div class="b" style="left:112px;top:603px;width:6px;height:1px;border-top:1px dotted #a0a0a0;"></div><svg style="left:102px;top:598px" width="9" height="9"><use href="#plus"/></svg><svg style="left:120px;top:595px" width="14" height="16"><use href="#npo"/></svg><div class="t" style="left:139px;top:594px;height:18px;line-height:18px;font-size:12px;color:#000;letter-spacing:-0.313px;">AR2-001/001113 (IT)</div><div class="t" style="left:459px;top:593px;height:18px;line-height:18px;font-size:12px;color:#a3a3a3;letter-spacing:-0.467px;">00</div><div class="b" style="left:88px;top:621px;width:11px;height:1px;border-top:1px dotted #a0a0a0;"></div><svg style="left:100px;top:613px" width="16" height="16"><use href="#nb"/></svg><div class="t" style="left:120px;top:612px;height:18px;line-height:18px;font-size:12px;color:#000;letter-spacing:-0.141px;">Valutazioni dei rischi personalizzate</div><div class="b" style="left:93px;top:639px;width:6px;height:1px;border-top:1px dotted #a0a0a0;"></div><svg style="left:83px;top:634px" width="9" height="9"><use href="#plus"/></svg><svg style="left:100px;top:631px" width="16" height="16"><use href="#nb"/></svg><div class="t" style="left:120px;top:630px;height:18px;line-height:18px;font-size:12px;color:#000;letter-spacing:0.084px;">Dichiarazioni di conformità</div><div class="b" style="left:93px;top:657px;width:6px;height:1px;border-top:1px dotted #a0a0a0;"></div><svg style="left:83px;top:652px" width="9" height="9"><use href="#plus"/></svg><svg style="left:100px;top:649px" width="16" height="16"><use href="#nb"/></svg><div class="t" style="left:120px;top:648px;height:18px;line-height:18px;font-size:12px;color:#000;letter-spacing:-0.252px;">Marcatura CE</div><div class="b" style="left:36px;top:675px;width:6px;height:1px;border-top:1px dotted #a0a0a0;"></div><svg style="left:26px;top:670px" width="9" height="9"><use href="#minus"/></svg><svg style="left:43px;top:667px" width="16" height="16"><use href="#gimg"/></svg><div class="t" style="left:63px;top:666px;height:18px;line-height:18px;font-size:12px;color:#000;letter-spacing:-0.625px;">2017.09</div><div class="b" style="left:55px;top:693px;width:6px;height:1px;border-top:1px dotted #a0a0a0;"></div><svg style="left:45px;top:688px" width="9" height="9"><use href="#plus"/></svg><svg style="left:62px;top:685px" width="16" height="16"><use href="#gear"/></svg><div class="t" style="left:82px;top:684px;height:18px;line-height:18px;font-size:12px;color:#000;letter-spacing:-0.174px;">An 2664 "Requisiti" rev. 00</div><div class="t" style="left:459px;top:683px;height:18px;line-height:18px;font-size:12px;color:#a3a3a3;letter-spacing:-0.407px;">M. - Ma</div><div class="b" style="left:55px;top:711px;width:6px;height:1px;border-top:1px dotted #a0a0a0;"></div><svg style="left:45px;top:706px" width="9" height="9"><use href="#minus"/></svg><svg style="left:62px;top:703px" width="16" height="16"><use href="#gear"/></svg><div class="t" style="left:82px;top:702px;height:18px;line-height:18px;font-size:12px;color:#000;letter-spacing:-0.155px;">An 2664 "Pericoli" rev. 00</div><div class="t" style="left:459px;top:701px;height:18px;line-height:18px;font-size:12px;color:#a3a3a3;letter-spacing:-0.407px;">M. - Ma</div><div class="b" style="left:74px;top:729px;width:6px;height:1px;border-top:1px dotted #a0a0a0;"></div><svg style="left:64px;top:724px" width="9" height="9"><use href="#minus"/></svg><svg style="left:81px;top:721px" width="16" height="16"><use href="#book"/></svg><div class="t" style="left:101px;top:720px;height:18px;line-height:18px;font-size:12px;color:#000;letter-spacing:-0.061px;">Fascicolo tecnico</div><div class="t" style="left:459px;top:719px;height:18px;line-height:18px;font-size:12px;color:#a3a3a3;letter-spacing:-0.569px;">Dir. 200</div><div class="b" style="left:93px;top:747px;width:6px;height:1px;border-top:1px dotted #a0a0a0;"></div><svg style="left:83px;top:742px" width="9" height="9"><use href="#minus"/></svg><svg style="left:100px;top:739px" width="16" height="16"><use href="#nb"/></svg><div class="t" style="left:120px;top:738px;height:18px;line-height:18px;font-size:12px;color:#000;letter-spacing:-0.271px;">Valutazioni dei rischi RESS All. I Dir. 2006/42/CE</div><div class="b" style="left:112px;top:765px;width:6px;height:1px;border-top:1px dotted #a0a0a0;"></div><svg style="left:102px;top:760px" width="9" height="9"><use href="#plus"/></svg><svg style="left:120px;top:757px" width="14" height="16"><use href="#npo"/></svg><div class="t" style="left:139px;top:756px;height:18px;line-height:18px;font-size:12px;color:#000;letter-spacing:-0.360px;">AR2-001/001130 (IT)</div><div class="t" style="left:459px;top:755px;height:18px;line-height:18px;font-size:12px;color:#a3a3a3;letter-spacing:-0.467px;">00</div><div class="b" style="left:93px;top:783px;width:6px;height:1px;border-top:1px dotted #a0a0a0;"></div><svg style="left:83px;top:778px" width="9" height="9"><use href="#plus"/></svg><svg style="left:100px;top:775px" width="16" height="16"><use href="#nb"/></svg><div class="t" style="left:120px;top:774px;height:18px;line-height:18px;font-size:12px;color:#000;letter-spacing:-0.141px;">Valutazioni dei rischi personalizzate</div><div class="b" style="left:93px;top:801px;width:6px;height:1px;border-top:1px dotted #a0a0a0;"></div><svg style="left:83px;top:796px" width="9" height="9"><use href="#plus"/></svg><svg style="left:100px;top:793px" width="16" height="16"><use href="#nb"/></svg><div class="t" style="left:120px;top:792px;height:18px;line-height:18px;font-size:12px;color:#000;letter-spacing:0.084px;">Dichiarazioni di conformità</div><div class="b" style="left:93px;top:819px;width:6px;height:1px;border-top:1px dotted #a0a0a0;"></div><svg style="left:83px;top:814px" width="9" height="9"><use href="#plus"/></svg><svg style="left:100px;top:811px" width="16" height="16"><use href="#nb"/></svg><div class="t" style="left:120px;top:810px;height:18px;line-height:18px;font-size:12px;color:#000;letter-spacing:-0.252px;">Marcatura CE</div><div class="b" style="left:11px;top:13px;width:1px;height:9px;border-left:1px dotted #a0a0a0;"></div><div class="b" style="left:11px;top:31px;width:1px;height:9px;border-left:1px dotted #a0a0a0;"></div><div class="b" style="left:11px;top:49px;width:1px;height:9px;border-left:1px dotted #a0a0a0;"></div><div class="b" style="left:11px;top:67px;width:1px;height:9px;border-left:1px dotted #a0a0a0;"></div><div class="b" style="left:30px;top:89px;width:1px;height:5px;border-left:1px dotted #a0a0a0;"></div><div class="b" style="left:30px;top:103px;width:1px;height:9px;border-left:1px dotted #a0a0a0;"></div><div class="b" style="left:30px;top:121px;width:1px;height:9px;border-left:1px dotted #a0a0a0;"></div><div class="b" style="left:30px;top:139px;width:1px;height:9px;border-left:1px dotted #a0a0a0;"></div><div class="b" style="left:30px;top:157px;width:1px;height:9px;border-left:1px dotted #a0a0a0;"></div><div class="b" style="left:49px;top:179px;width:1px;height:5px;border-left:1px dotted #a0a0a0;"></div><div class="b" style="left:49px;top:193px;width:1px;height:9px;border-left:1px dotted #a0a0a0;"></div><div class="b" style="left:49px;top:211px;width:1px;height:9px;border-left:1px dotted #a0a0a0;"></div><div class="b" style="left:49px;top:229px;width:1px;height:9px;border-left:1px dotted #a0a0a0;"></div><div class="b" style="left:68px;top:251px;width:1px;height:5px;border-left:1px dotted #a0a0a0;"></div><div class="b" style="left:87px;top:269px;width:1px;height:5px;border-left:1px dotted #a0a0a0;"></div><div class="b" style="left:106px;top:287px;width:1px;height:5px;border-left:1px dotted #a0a0a0;"></div><div class="b" style="left:87px;top:283px;width:1px;height:27px;border-left:1px dotted #a0a0a0;"></div><div class="b" style="left:87px;top:319px;width:1px;height:9px;border-left:1px dotted #a0a0a0;"></div><div class="b" style="left:87px;top:337px;width:1px;height:9px;border-left:1px dotted #a0a0a0;"></div><div class="b" style="left:30px;top:175px;width:1px;height:189px;border-left:1px dotted #a0a0a0;"></div><div class="b" style="left:49px;top:377px;width:1px;height:5px;border-left:1px dotted #a0a0a0;"></div><div class="b" style="left:49px;top:391px;width:1px;height:9px;border-left:1px dotted #a0a0a0;"></div><div class="b" style="left:68px;top:413px;width:1px;height:5px;border-left:1px dotted #a0a0a0;"></div><div class="b" style="left:87px;top:431px;width:1px;height:5px;border-left:1px dotted #a0a0a0;"></div><div class="b" style="left:106px;top:449px;width:1px;height:10px;border-left:1px dotted #a0a0a0;"></div><div class="b" style="left:87px;top:445px;width:1px;height:32px;border-left:1px dotted #a0a0a0;"></div><div class="b" style="left:87px;top:477px;width:1px;height:18px;border-left:1px dotted #a0a0a0;"></div><div class="b" style="left:87px;top:495px;width:1px;height:13px;border-left:1px dotted #a0a0a0;"></div><div class="b" style="left:87px;top:517px;width:1px;height:9px;border-left:1px dotted #a0a0a0;"></div><div class="b" style="left:49px;top:409px;width:1px;height:135px;border-left:1px dotted #a0a0a0;"></div><div class="b" style="left:68px;top:557px;width:1px;height:5px;border-left:1px dotted #a0a0a0;"></div><div class="b" style="left:87px;top:575px;width:1px;height:5px;border-left:1px dotted #a0a0a0;"></div><div class="b" style="left:106px;top:593px;width:1px;height:5px;border-left:1px dotted #a0a0a0;"></div><div class="b" style="left:87px;top:589px;width:1px;height:32px;border-left:1px dotted #a0a0a0;"></div><div class="b" style="left:87px;top:621px;width:1px;height:13px;border-left:1px dotted #a0a0a0;"></div><div class="b" style="left:87px;top:643px;width:1px;height:9px;border-left:1px dotted #a0a0a0;"></div><div class="b" style="left:30px;top:373px;width:1px;height:297px;border-left:1px dotted #a0a0a0;"></div><div class="b" style="left:49px;top:683px;width:1px;height:5px;border-left:1px dotted #a0a0a0;"></div><div class="b" style="left:49px;top:697px;width:1px;height:9px;border-left:1px dotted #a0a0a0;"></div><div class="b" style="left:68px;top:719px;width:1px;height:5px;border-left:1px dotted #a0a0a0;"></div><div class="b" style="left:87px;top:737px;width:1px;height:5px;border-left:1px dotted #a0a0a0;"></div><div class="b" style="left:106px;top:755px;width:1px;height:5px;border-left:1px dotted #a0a0a0;"></div><div class="b" style="left:87px;top:751px;width:1px;height:27px;border-left:1px dotted #a0a0a0;"></div><div class="b" style="left:87px;top:787px;width:1px;height:9px;border-left:1px dotted #a0a0a0;"></div><div class="b" style="left:87px;top:805px;width:1px;height:9px;border-left:1px dotted #a0a0a0;"></div><div class="b" style="left:11px;top:85px;width:1px;height:743px;border-left:1px dotted #a0a0a0;"></div><div class="b" style="left:30px;top:679px;width:1px;height:149px;border-left:1px dotted #a0a0a0;"></div></div>
<div class="b" style="left:498px;top:139px;width:15px;height:855px;background:#f0f0f0;"></div>
<svg style="left:501.500px;top:145px" width="8" height="6" viewBox="0 0 8 6"><path d="M0.500 5L4 1.500l3.500 3.500" stroke="#505050" stroke-width="1.900" fill="none"/></svg>
<svg style="left:501.500px;top:965px" width="8" height="6" viewBox="0 0 8 6"><path d="M0.500 1L4 4.500l3.500-3.500" stroke="#505050" stroke-width="1.900" fill="none"/></svg>
<div class="b" style="left:498px;top:156px;width:15px;height:472px;background:#cdcdcd;"></div>
<div class="b" style="left:0px;top:977px;width:498px;height:17px;background:#f0f0f0;"></div>
<div class="b" style="left:17px;top:978px;width:380px;height:15px;background:#cdcdcd;"></div>
<svg style="left:5px;top:981px" width="6" height="9" viewBox="0 0 6 9"><path d="M5 1L1.500 4.500l3.500 3.500" stroke="#505050" stroke-width="1.900" fill="none"/></svg>
<svg style="left:486px;top:981px" width="6" height="9" viewBox="0 0 6 9"><path d="M1 1L4.500 4.500l-3.500 3.500" stroke="#505050" stroke-width="1.900" fill="none"/></svg>
<div class="b" style="left:0px;top:994px;width:513px;height:20px;background:#e6e6e6;border-top:1px solid #8a8a8a;"></div>
<div class="b" style="left:0px;top:994px;width:66px;height:20px;background:#f5f6f7;border:1px solid #6e6e6e;border-top:none;border-radius:0 0 3px 3px;box-sizing:border-box;"></div>
<svg style="left:4px;top:996px" width="13" height="16" viewBox="0 0 13 16"><path d="M0 2.500v11c0 1.300 3 2.300 6.500 2.300s6.500-1 6.500-2.300v-11z" fill="#f0a850"/><ellipse cx="6.500" cy="2.700" rx="6.500" ry="2.400" fill="#f7cf9a"/></svg>
<div class="t" style="left:21px;top:996px;height:16px;line-height:16px;font-size:11px;color:#000;letter-spacing:-0.265px;">Archivio</div>
<svg style="left:70px;top:996px" width="14" height="15"><use href="#book"/></svg>
<div class="t" style="left:86px;top:996px;height:16px;line-height:16px;font-size:11px;color:#6d6d6d;letter-spacing:-0.125px;">Normativa</div>
<div class="b" style="left:143px;top:997px;width:1px;height:16px;background:#555;"></div>
<svg style="left:146px;top:995px" width="14" height="17" viewBox="0 0 14 17"><rect x="0.800" y="2.500" width="12.400" height="13.500" fill="#fff" stroke="#f0a850" stroke-width="1.600"/><rect x="4.500" y="0.500" width="5" height="3.500" rx="1" fill="#777"/><path d="M3.500 9l2.500 3 4.500-5.500" stroke="#d03030" stroke-width="1.800" fill="none"/></svg>
<div class="t" style="left:163px;top:996px;height:16px;line-height:16px;font-size:11px;color:#6d6d6d;letter-spacing:-0.168px;">Check list</div>
<div class="b" style="left:216px;top:997px;width:1px;height:16px;background:#555;"></div>
<div class="b" style="left:513px;top:96px;width:1407px;height:919px;background:#f2f2f3;"></div>
<div class="b" style="left:518px;top:96px;width:1px;height:919px;background:#6a6a6a;"></div>
<div class="b" style="left:518px;top:96px;width:1402px;height:1px;background:#c4c4c4;"></div>
<div class="b" style="left:519px;top:97px;width:1401px;height:23px;background:#efefef;"></div>
<div class="b" style="left:519px;top:119px;width:1401px;height:1px;background:#7a7a7a;"></div>
<svg style="left:1486px;top:100px" width="131" height="20" viewBox="0 0 131 20"><path d="M0 19.500L17.500 2c0.800-0.900 1.500-1.500 3-1.500H127c1.500 0 3 1 3 3V19.500" fill="#e4e4e4" stroke="#7a7a7a"/></svg>
<svg style="left:1285px;top:100px" width="209" height="20" viewBox="0 0 209 20"><path d="M0 19.500L17.500 2c0.800-0.900 1.500-1.500 3-1.500H205c1.500 0 3 1 3 3V19.500" fill="#e4e4e4" stroke="#7a7a7a"/></svg>
<svg style="left:1085px;top:100px" width="209" height="20" viewBox="0 0 209 20"><path d="M0 19.500L17.500 2c0.800-0.900 1.500-1.500 3-1.500H205c1.500 0 3 1 3 3V19.500" fill="#e4e4e4" stroke="#7a7a7a"/></svg>
<svg style="left:685px;top:100px" width="209" height="20" viewBox="0 0 209 20"><path d="M0 19.500L17.500 2c0.800-0.900 1.500-1.500 3-1.500H205c1.500 0 3 1 3 3V19.500" fill="#e4e4e4" stroke="#7a7a7a"/></svg>
<svg style="left:525px;top:100px" width="170" height="20" viewBox="0 0 170 20"><path d="M0 19.500L17.500 2c0.800-0.900 1.500-1.500 3-1.500H166c1.500 0 3 1 3 3V19.500" fill="#e4e4e4" stroke="#7a7a7a"/></svg>
<svg style="left:885px;top:99px" width="209" height="22" viewBox="0 0 209 22"><path d="M0 21.500L17.500 2c0.800-0.900 1.500-1.500 3-1.500H205c1.500 0 3 1 3 3V21.500" fill="#fff" stroke="#6e6e6e"/></svg>
<svg style="left:544px;top:102px" width="16" height="16" viewBox="0 0 24 24"><path d="M17.5 0h3.8v6.5l-3.8-3.8z" fill="#3b73b9"/><path d="M12 0L0 12.5h5V24h5v-7h4v7h5V12.5h5z" fill="#6e6e6e"/></svg>
<div class="t" style="left:571px;top:102px;height:16px;line-height:16px;font-size:11px;color:#000;letter-spacing:-0.195px;">Home | Dashboard</div>
<svg style="left:705px;top:102px" width="14" height="16"><use href="#npb"/></svg>
<div class="t" style="left:723px;top:102px;height:16px;line-height:16px;font-size:11px;color:#000;letter-spacing:-0.122px;">VR2-001/001125 (Valutazione)</div>
<svg style="left:905px;top:102px" width="14" height="16"><use href="#npo"/></svg>
<div class="t" style="left:925px;top:102px;height:16px;line-height:16px;font-size:11px;color:#000;letter-spacing:0.802px;font-weight:bold;">AR2-001/001113 (Valut...</div>
<svg style="left:1079px;top:105px" width="9" height="9" viewBox="0 0 9 9"><path d="M0.500 0.500l8 8M8.500 0.500l-8 8" stroke="#000" stroke-width="1.400" fill="none"/></svg>
<svg style="left:1105px;top:102px" width="14" height="16"><use href="#npo"/></svg>
<div class="t" style="left:1123px;top:102px;height:16px;line-height:16px;font-size:11px;color:#000;letter-spacing:0.083px;">AR2-001/001130 (Valutazio...</div>
<svg style="left:1305px;top:102px" width="14" height="16"><use href="#npo"/></svg>
<div class="t" style="left:1323px;top:102px;height:16px;line-height:16px;font-size:11px;color:#000;letter-spacing:0.054px;">AR2-001/001072 (Valutazio...</div>
<svg style="left:1503px;top:102px" width="16" height="16" viewBox="0 0 16 16"><path d="M2.500 0v16M8 0v16M13.500 0v16" stroke="#6e6e6e" stroke-width="1.200"/><rect x="0.500" y="3" width="4" height="3" fill="#3b73b9"/><rect x="6" y="9" width="4" height="3" fill="#3b73b9"/><rect x="11.500" y="4" width="4" height="3" fill="#3b73b9"/></svg>
<div class="t" style="left:1526px;top:102px;height:16px;line-height:16px;font-size:11px;color:#000;letter-spacing:0.089px;">about:config</div>
<svg style="left:1902px;top:108px" width="9" height="5"><use href="#dd"/></svg>
<div class="b" style="left:519px;top:120px;width:551px;height:25px;background:#f5f6f7;"></div>
<svg style="left:522px;top:125px" width="2" height="18" viewBox="0 0 2 18"><path d="M1 0v18" stroke="#b5b5b5" stroke-width="2" stroke-dasharray="2 2"/></svg>
<svg style="left:530px;top:125px" width="16" height="16"><use href="#gplus"/></svg>
<div class="t" style="left:549px;top:124px;height:18px;line-height:18px;font-size:12px;color:#000;letter-spacing:0.287px;">Aggiungi</div>
<svg style="left:604px;top:132px" width="6" height="3"><use href="#dd"/></svg>
<svg style="left:1008px;top:125px" width="15" height="16"><use href="#funnel"/></svg>
<div class="t" style="left:1027px;top:124px;height:18px;line-height:18px;font-size:12px;color:#000;letter-spacing:0.056px;">Filtro</div>
<svg style="left:1059px;top:132px" width="6" height="3"><use href="#dd"/></svg>
<div class="b" style="left:519px;top:145px;width:551px;height:870px;background:#fff;"></div>
<div class="t" style="left:524px;top:147px;height:19px;line-height:19px;font-size:12px;color:#000;letter-spacing:-0.043px;">Pericoli</div>
<div class="b" style="left:879px;top:146px;width:1px;height:19px;background:#e0e0e0;"></div>
<div class="t" style="left:885px;top:147px;height:19px;line-height:19px;font-size:12px;color:#000;letter-spacing:-0.113px;">Requisiti</div>
<div class="b" style="left:1059px;top:146px;width:1px;height:19px;background:#e0e0e0;"></div>
<svg style="left:526px;top:172px" width="9" height="9"><use href="#minus"/></svg>
<div class="b" style="left:536px;top:176px;width:6px;height:1px;border-top:1px dotted #a0a0a0;"></div>
<div class="b" style="left:543px;top:169px;width:13px;height:13px;background:#fff;border:1px solid #d4d4d4;box-sizing:border-box;"></div>
<svg style="left:559px;top:170px" width="16" height="14"><use href="#folder"/></svg>
<div class="t" style="left:579px;top:166px;height:20px;line-height:20px;font-size:12px;color:#000;letter-spacing:-0.044px;">1 - Pericoli di natura meccanica</div>
<div class="b" style="left:550px;top:196px;width:11px;height:1px;border-top:1px dotted #a0a0a0;"></div>
<div class="b" style="left:562px;top:189px;width:13px;height:13px;background:#fff;border:1px solid #333;box-sizing:border-box;"></div>
<svg style="left:577px;top:188px;color:#e8825a" width="13" height="16.500"><use href="#flame"/></svg>
<svg style="left:585px;top:195px" width="9" height="9"><use href="#bq"/></svg>
<div class="t" style="left:598px;top:186px;height:20px;line-height:20px;font-size:12px;color:#000;letter-spacing:0.034px;">1.1 - Investimento</div>
<div class="b" style="left:550px;top:216px;width:11px;height:1px;border-top:1px dotted #a0a0a0;"></div>
<div class="b" style="left:562px;top:209px;width:13px;height:13px;background:#fff;border:1px solid #333;box-sizing:border-box;"></div>
<svg style="left:580px;top:209px;color:#e8825a" width="13" height="16.500"><use href="#flame"/></svg>
<svg style="left:579px;top:215px" width="7" height="7"><use href="#bx"/></svg>
<div class="t" style="left:598px;top:206px;height:20px;line-height:20px;font-size:12px;color:#000;letter-spacing:-0.198px;">1.2 - Spinta</div>
<div class="b" style="left:519px;top:226px;width:551px;height:20px;background:#e6e6fa;"></div>
<div class="b" style="left:550px;top:236px;width:11px;height:1px;border-top:1px dotted #a0a0a0;"></div>
<div class="b" style="left:562px;top:229px;width:13px;height:13px;background:#fff;border:1px solid #333;box-sizing:border-box;"></div>
<svg style="left:577px;top:228px;color:#e8825a" width="13" height="16.500"><use href="#flame"/></svg>
<svg style="left:585px;top:235px" width="9" height="9"><use href="#bok"/></svg>
<div class="t" style="left:598px;top:226px;height:20px;line-height:20px;font-size:12px;color:#000;letter-spacing:-0.103px;">1.3 - Schiacciamento</div>
<div class="b" style="left:550px;top:256px;width:11px;height:1px;border-top:1px dotted #a0a0a0;"></div>
<div class="b" style="left:562px;top:249px;width:13px;height:13px;background:#fff;border:1px solid #333;box-sizing:border-box;"></div>
<svg style="left:577px;top:248px;color:#f6c5b3" width="13" height="16.500"><use href="#flame"/></svg>
<div class="t" style="left:598px;top:246px;height:20px;line-height:20px;font-size:12px;color:#000;letter-spacing:-0.057px;">1.4 - Taglio o sezionamento</div>
<div class="b" style="left:550px;top:276px;width:11px;height:1px;border-top:1px dotted #a0a0a0;"></div>
<div class="b" style="left:562px;top:269px;width:13px;height:13px;background:#fff;border:1px solid #333;box-sizing:border-box;"></div>
<svg style="left:577px;top:268px;color:#f6c5b3" width="13" height="16.500"><use href="#flame"/></svg>
<div class="t" style="left:598px;top:266px;height:20px;line-height:20px;font-size:12px;color:#000;letter-spacing:0.015px;">1.5 - Trascinamento o intrappolamento</div>
<div class="b" style="left:550px;top:296px;width:11px;height:1px;border-top:1px dotted #a0a0a0;"></div>
<div class="b" style="left:562px;top:289px;width:13px;height:13px;background:#fff;border:1px solid #333;box-sizing:border-box;"></div>
<svg style="left:577px;top:288px;color:#f6c5b3" width="13" height="16.500"><use href="#flame"/></svg>
<div class="t" style="left:598px;top:286px;height:20px;line-height:20px;font-size:12px;color:#000;letter-spacing:0.103px;">1.6 - Impigliamento</div>
<div class="b" style="left:550px;top:316px;width:11px;height:1px;border-top:1px dotted #a0a0a0;"></div>
<div class="b" style="left:562px;top:309px;width:13px;height:13px;background:#fff;border:1px solid #333;box-sizing:border-box;"></div>
<svg style="left:577px;top:308px;color:#f6c5b3" width="13" height="16.500"><use href="#flame"/></svg>
<div class="t" style="left:598px;top:306px;height:20px;line-height:20px;font-size:12px;color:#000;letter-spacing:-0.003px;">1.7 - Attrito o abrasione</div>
<div class="b" style="left:550px;top:336px;width:11px;height:1px;border-top:1px dotted #a0a0a0;"></div>
<div class="b" style="left:562px;top:329px;width:13px;height:13px;background:#fff;border:1px solid #333;box-sizing:border-box;"></div>
<svg style="left:577px;top:328px;color:#f6c5b3" width="13" height="16.500"><use href="#flame"/></svg>
<div class="t" style="left:598px;top:326px;height:20px;line-height:20px;font-size:12px;color:#000;letter-spacing:-0.102px;">1.8 - Urto</div>
<div class="b" style="left:550px;top:356px;width:11px;height:1px;border-top:1px dotted #a0a0a0;"></div>
<div class="b" style="left:562px;top:349px;width:13px;height:13px;background:#fff;border:1px solid #333;box-sizing:border-box;"></div>
<svg style="left:577px;top:348px;color:#f6c5b3" width="13" height="16.500"><use href="#flame"/></svg>
<div class="t" style="left:598px;top:346px;height:20px;line-height:20px;font-size:12px;color:#000;letter-spacing:-0.159px;">1.9 - Iniezione</div>
<div class="b" style="left:550px;top:376px;width:11px;height:1px;border-top:1px dotted #a0a0a0;"></div>
<div class="b" style="left:562px;top:369px;width:13px;height:13px;background:#fff;border:1px solid #333;box-sizing:border-box;"></div>
<svg style="left:577px;top:368px;color:#f6c5b3" width="13" height="16.500"><use href="#flame"/></svg>
<div class="t" style="left:598px;top:366px;height:20px;line-height:20px;font-size:12px;color:#000;letter-spacing:-0.151px;">1.10 - Cesoiamento</div>
<div class="b" style="left:550px;top:396px;width:11px;height:1px;border-top:1px dotted #a0a0a0;"></div>
<div class="b" style="left:562px;top:389px;width:13px;height:13px;background:#fff;border:1px solid #333;box-sizing:border-box;"></div>
<svg style="left:577px;top:388px;color:#f6c5b3" width="13" height="16.500"><use href="#flame"/></svg>
<div class="t" style="left:598px;top:386px;height:20px;line-height:20px;font-size:12px;color:#000;letter-spacing:-0.032px;">1.11 - Scivolamento, inciampo e caduta</div>
<div class="b" style="left:550px;top:416px;width:11px;height:1px;border-top:1px dotted #a0a0a0;"></div>
<div class="b" style="left:562px;top:409px;width:13px;height:13px;background:#fff;border:1px solid #333;box-sizing:border-box;"></div>
<svg style="left:577px;top:408px;color:#f6c5b3" width="13" height="16.500"><use href="#flame"/></svg>
<div class="t" style="left:598px;top:406px;height:20px;line-height:20px;font-size:12px;color:#000;letter-spacing:-0.107px;">1.12 - Perforazione o puntura</div>
<div class="b" style="left:550px;top:436px;width:11px;height:1px;border-top:1px dotted #a0a0a0;"></div>
<div class="b" style="left:562px;top:429px;width:13px;height:13px;background:#fff;border:1px solid #333;box-sizing:border-box;"></div>
<svg style="left:577px;top:428px;color:#f6c5b3" width="13" height="16.500"><use href="#flame"/></svg>
<div class="t" style="left:598px;top:426px;height:20px;line-height:20px;font-size:12px;color:#000;letter-spacing:-0.045px;">1.13 - Soffocamento</div>
<svg style="left:526px;top:452px" width="9" height="9"><use href="#plus"/></svg>
<div class="b" style="left:536px;top:456px;width:6px;height:1px;border-top:1px dotted #a0a0a0;"></div>
<div class="b" style="left:543px;top:449px;width:13px;height:13px;background:#fff;border:1px solid #d4d4d4;box-sizing:border-box;"></div>
<svg style="left:559px;top:450px" width="16" height="14"><use href="#folder"/></svg>
<div class="t" style="left:579px;top:446px;height:20px;line-height:20px;font-size:12px;color:#000;letter-spacing:-0.033px;">2 - Pericoli di natura elettrica</div>
<svg style="left:526px;top:472px" width="9" height="9"><use href="#plus"/></svg>
<div class="b" style="left:536px;top:476px;width:6px;height:1px;border-top:1px dotted #a0a0a0;"></div>
<div class="b" style="left:543px;top:469px;width:13px;height:13px;background:#fff;border:1px solid #d4d4d4;box-sizing:border-box;"></div>
<svg style="left:559px;top:470px" width="16" height="14"><use href="#folder"/></svg>
<div class="t" style="left:579px;top:466px;height:20px;line-height:20px;font-size:12px;color:#000;letter-spacing:-0.013px;">3 - Pericoli di natura termica</div>
<svg style="left:526px;top:492px" width="9" height="9"><use href="#plus"/></svg>
<div class="b" style="left:536px;top:496px;width:6px;height:1px;border-top:1px dotted #a0a0a0;"></div>
<div class="b" style="left:543px;top:489px;width:13px;height:13px;background:#fff;border:1px solid #d4d4d4;box-sizing:border-box;"></div>
<svg style="left:559px;top:490px" width="16" height="14"><use href="#folder"/></svg>
<div class="t" style="left:579px;top:486px;height:20px;line-height:20px;font-size:12px;color:#000;letter-spacing:-0.002px;">4 - Pericoli generati dal rumore</div>
<svg style="left:526px;top:512px" width="9" height="9"><use href="#plus"/></svg>
<div class="b" style="left:536px;top:516px;width:6px;height:1px;border-top:1px dotted #a0a0a0;"></div>
<div class="b" style="left:543px;top:509px;width:13px;height:13px;background:#fff;border:1px solid #d4d4d4;box-sizing:border-box;"></div>
<svg style="left:559px;top:510px" width="16" height="14"><use href="#folder"/></svg>
<div class="t" style="left:579px;top:506px;height:20px;line-height:20px;font-size:12px;color:#000;letter-spacing:-0.060px;">5 - Pericoli generati da vibrazioni</div>
<svg style="left:526px;top:532px" width="9" height="9"><use href="#plus"/></svg>
<div class="b" style="left:536px;top:536px;width:6px;height:1px;border-top:1px dotted #a0a0a0;"></div>
<div class="b" style="left:543px;top:529px;width:13px;height:13px;background:#fff;border:1px solid #d4d4d4;box-sizing:border-box;"></div>
<svg style="left:559px;top:530px" width="16" height="14"><use href="#folder"/></svg>
<div class="t" style="left:579px;top:526px;height:20px;line-height:20px;font-size:12px;color:#000;letter-spacing:-0.079px;">6 - Pericoli generati da radiazioni</div>
<svg style="left:526px;top:552px" width="9" height="9"><use href="#plus"/></svg>
<div class="b" style="left:536px;top:556px;width:6px;height:1px;border-top:1px dotted #a0a0a0;"></div>
<div class="b" style="left:543px;top:549px;width:13px;height:13px;background:#fff;border:1px solid #d4d4d4;box-sizing:border-box;"></div>
<svg style="left:559px;top:550px" width="16" height="14"><use href="#folder"/></svg>
<div class="t" style="left:579px;top:546px;height:20px;line-height:20px;font-size:12px;color:#000;letter-spacing:-0.072px;">7 - Pericoli generati da materiali/sostanze</div>
<svg style="left:526px;top:572px" width="9" height="9"><use href="#plus"/></svg>
<div class="b" style="left:536px;top:576px;width:6px;height:1px;border-top:1px dotted #a0a0a0;"></div>
<div class="b" style="left:543px;top:569px;width:13px;height:13px;background:#fff;border:1px solid #d4d4d4;box-sizing:border-box;"></div>
<svg style="left:559px;top:570px" width="16" height="14"><use href="#folder"/></svg>
<div class="t" style="left:579px;top:566px;height:20px;line-height:20px;font-size:12px;color:#000;letter-spacing:0.007px;">8 - Pericoli di natura ergonomica</div>
<svg style="left:526px;top:592px" width="9" height="9"><use href="#plus"/></svg>
<div class="b" style="left:536px;top:596px;width:6px;height:1px;border-top:1px dotted #a0a0a0;"></div>
<div class="b" style="left:543px;top:589px;width:13px;height:13px;background:#fff;border:1px solid #d4d4d4;box-sizing:border-box;"></div>
<svg style="left:559px;top:590px" width="16" height="14"><use href="#folder"/></svg>
<div class="t" style="left:579px;top:586px;height:20px;line-height:20px;font-size:12px;color:#000;letter-spacing:-0.063px;">9 - Pericoli associati all'ambiente in cui la macchina è ...</div>
<svg style="left:526px;top:612px" width="9" height="9"><use href="#plus"/></svg>
<div class="b" style="left:536px;top:616px;width:6px;height:1px;border-top:1px dotted #a0a0a0;"></div>
<div class="b" style="left:543px;top:609px;width:13px;height:13px;background:#fff;border:1px solid #d4d4d4;box-sizing:border-box;"></div>
<svg style="left:559px;top:610px" width="16" height="14"><use href="#folder"/></svg>
<div class="t" style="left:579px;top:606px;height:20px;line-height:20px;font-size:12px;color:#000;letter-spacing:0.009px;">10 - Combinazione di pericoli</div>
<div class="b" style="left:530px;top:181px;width:1px;height:431px;border-left:1px dotted #a0a0a0;"></div>
<div class="b" style="left:549px;top:187px;width:1px;height:249px;border-left:1px dotted #a0a0a0;"></div>
<div class="b" style="left:1070px;top:120px;width:4px;height:895px;background:#eeeeee;"></div>
<div class="b" style="left:1074px;top:120px;width:846px;height:51px;background:#f5f6f7;"></div>
<svg style="left:1077px;top:125px" width="2" height="38" viewBox="0 0 2 38"><path d="M1 0v38" stroke="#b5b5b5" stroke-width="2" stroke-dasharray="2 2"/></svg>
<svg style="left:1106px;top:125px" width="24" height="24"><use href="#prev"/></svg>
<div class="t" style="left:1088px;top:149px;height:17px;line-height:17px;font-size:12px;color:#000;letter-spacing:-0.238px;">Precedente</div>
<svg style="left:1169px;top:125px" width="24" height="24"><use href="#chk24"/></svg>
<div class="t" style="left:1158px;top:149px;height:17px;line-height:17px;font-size:12px;color:#000;letter-spacing:-0.379px;">Presente</div>
<svg style="left:1209px;top:144px" width="6" height="3"><use href="#dd"/></svg>
<div class="t" style="left:1223px;top:126px;height:14px;line-height:14px;font-size:10px;color:#000;letter-spacing:0.366px;font-family:'DejaVu Sans',sans-serif;">1.3</div>
<div class="t" style="left:1224px;top:142px;height:26px;line-height:26px;font-size:18.67px;color:#000;letter-spacing:-0.070px;font-family:'DejaVu Sans',sans-serif;">Schiacciamento</div>
<svg style="left:1872.5px;top:125px" width="24" height="24"><use href="#next"/></svg>
<div class="t" style="left:1854px;top:149px;height:17px;line-height:17px;font-size:12px;color:#000;letter-spacing:-0.269px;">Successivo</div>
<div class="b" style="left:1074px;top:171px;width:846px;height:112px;background:#fff;"></div>
<div class="b" style="left:1153px;top:174px;width:761px;height:24.5px;background:#f5f6f7;"></div>
<svg style="left:1156px;top:178px" width="2" height="16" viewBox="0 0 2 16"><path d="M1 0v16" stroke="#c0c0c0" stroke-width="2" stroke-dasharray="2 2"/></svg>
<div class="b" style="left:1163px;top:175px;width:138px;height:22px;background:#fff;"></div>
<div class="t" style="left:1166px;top:178px;height:16px;line-height:16px;font-size:12px;color:#000;letter-spacing:0.051px;">Tahoma</div>
<svg style="left:1303px;top:185px" width="6" height="3"><use href="#dd"/></svg>
<div class="b" style="left:1315px;top:175px;width:65px;height:22px;background:#fff;"></div>
<div class="t" style="left:1318px;top:178px;height:16px;line-height:16px;font-size:12px;color:#000;">8</div>
<svg style="left:1380px;top:185px" width="6" height="3"><use href="#dd"/></svg>
<div class="b" style="left:1394px;top:178px;width:1px;height:16px;background:#d0d0d0;"></div>
<div class="b" style="left:1469px;top:178px;width:1px;height:16px;background:#d0d0d0;"></div>
<div class="b" style="left:1567px;top:178px;width:1px;height:16px;background:#d0d0d0;"></div>
<div class="b" style="left:1628px;top:178px;width:1px;height:16px;background:#d0d0d0;"></div>
<div class="b" style="left:1680px;top:178px;width:1px;height:16px;background:#d0d0d0;"></div>
<div class="b" style="left:1709px;top:178px;width:1px;height:16px;background:#d0d0d0;"></div>
<div class="t" style="left:1402px;top:177px;height:18px;line-height:18px;font-family:'Liberation Serif',serif;font-weight:bold;font-size:15px;">B</div>
<div class="t" style="left:1426px;top:177px;height:18px;line-height:18px;font-family:'Liberation Serif',serif;font-style:italic;font-weight:bold;font-size:15px;">I</div>
<div class="t" style="left:1448px;top:177px;height:18px;line-height:18px;font-family:'Liberation Serif',serif;font-weight:bold;font-size:14px;text-decoration:underline;">U</div>
<svg style="left:1476px;top:180px" width="14" height="12" viewBox="0 0 14 12"><rect x="0" y="0.0" width="14" height="1.300" fill="#000"/><rect x="0" y="2.6" width="10" height="1.300" fill="#000"/><rect x="0" y="5.2" width="14" height="1.300" fill="#000"/><rect x="0" y="7.800000000000001" width="10" height="1.300" fill="#000"/><rect x="0" y="10.4" width="14" height="1.300" fill="#000"/></svg>
<svg style="left:1499px;top:180px" width="14" height="12" viewBox="0 0 14 12"><rect x="0.0" y="0.0" width="14" height="1.300" fill="#000"/><rect x="2.0" y="2.6" width="10" height="1.300" fill="#000"/><rect x="0.0" y="5.2" width="14" height="1.300" fill="#000"/><rect x="2.0" y="7.800000000000001" width="10" height="1.300" fill="#000"/><rect x="0.0" y="10.4" width="14" height="1.300" fill="#000"/></svg>
<svg style="left:1522px;top:180px" width="14" height="12" viewBox="0 0 14 12"><rect x="0" y="0.0" width="14" height="1.300" fill="#000"/><rect x="4" y="2.6" width="10" height="1.300" fill="#000"/><rect x="0" y="5.2" width="14" height="1.300" fill="#000"/><rect x="4" y="7.800000000000001" width="10" height="1.300" fill="#000"/><rect x="0" y="10.4" width="14" height="1.300" fill="#000"/></svg>
<div class="b" style="left:1541px;top:175px;width:22px;height:22px;background:#c8c8c8;border:1px solid #a0a0a0;box-sizing:border-box;"></div>
<svg style="left:1545px;top:180px" width="14" height="12" viewBox="0 0 14 12"><rect x="0" y="0.0" width="14" height="1.300" fill="#000"/><rect x="0" y="2.6" width="14" height="1.300" fill="#000"/><rect x="0" y="5.2" width="14" height="1.300" fill="#000"/><rect x="0" y="7.800000000000001" width="14" height="1.300" fill="#000"/><rect x="0" y="10.4" width="14" height="1.300" fill="#000"/></svg>
<svg style="left:1574px;top:179px" width="14" height="13" viewBox="0 0 14 13"><circle cx="1.500" cy="1.500" r="1.300" fill="#2b55b8"/><circle cx="1.500" cy="6.500" r="1.300" fill="#2b55b8"/><circle cx="1.500" cy="11.500" r="1.300" fill="#2b55b8"/><path d="M5 1.500h9M5 6.500h9M5 11.500h9" stroke="#000" stroke-width="1.300"/></svg>
<svg style="left:1596px;top:179px" width="14" height="13" viewBox="0 0 14 13"><rect x="0.500" y="0" width="1.600" height="3" fill="#2b55b8"/><rect x="0" y="5" width="2.600" height="3" fill="#2b55b8"/><rect x="0" y="10" width="2.600" height="3" fill="#2b55b8"/><path d="M5 1.500h9M5 6.500h9M5 11.500h9" stroke="#000" stroke-width="1.300"/></svg>
<svg style="left:1617px;top:185px" width="6" height="3"><use href="#dd"/></svg>
<div class="t" style="left:1636px;top:176px;height:18px;line-height:18px;font-family:'Liberation Serif',serif;font-weight:bold;font-size:16px;color:#2b55a8;">A</div>
<div class="t" style="left:1659px;top:173px;height:18px;line-height:18px;font-family:'Liberation Serif',serif;font-weight:bold;font-size:16px;color:#2b55a8;">A</div>
<div class="b" style="left:1657px;top:190px;width:16px;height:4px;background:#f04a10;"></div>
<div class="t" style="left:1686px;top:175px;height:12px;line-height:12px;font-size:10px;font-weight:bold;color:#222;">abc</div>
<svg style="left:1689px;top:183px" width="12" height="11" viewBox="0 0 12 11"><path d="M1 5.500l3 4L11 1" stroke="#d03a3a" stroke-width="2.400" fill="none"/></svg>
<svg style="left:1714px;top:178px" width="16" height="16"><use href="#wrench"/></svg>
<svg style="left:1733px;top:185px" width="6" height="3"><use href="#dd"/></svg>
<svg style="left:1090px;top:178px;color:#e98a64" width="40" height="50"><use href="#flame"/></svg>
<svg style="left:1110px;top:203px" width="26" height="26" viewBox="0 0 26 26"><circle cx="13" cy="12.850" r="12.300" fill="#fff"/><circle cx="13" cy="12.850" r="11" fill="#55ad88"/><path d="M4.900 13.300L7.500 10.800L11.500 14.800L18.600 7.700L21 10.200L11.500 20Z" fill="#fff"/></svg>
<div class="b" style="left:1154px;top:199px;width:1px;height:13px;background:#000;"></div>
<div class="t" style="left:1086px;top:246px;height:17px;line-height:17px;font-size:12px;color:#000;letter-spacing:-0.449px;">Scheda: 3</div>
<div class="b" style="left:1074px;top:283px;width:846px;height:28px;background:#efefef;"></div>
<div class="b" style="left:1074px;top:311px;width:845px;height:1px;background:#7d8c8c;"></div>
<div class="b" style="left:1074px;top:288px;width:64px;height:24px;background:#f7f7f8;border:1px solid #dcdcdc;border-bottom:none;box-sizing:border-box;"></div>
<svg style="left:1078px;top:292px" width="14" height="16"><use href="#tabic"/></svg>
<div class="t" style="left:1097px;top:292px;height:17px;line-height:17px;font-size:12px;color:#000;letter-spacing:-0.615px;">AR-002</div>
<div class="b" style="left:1139px;top:289px;width:64px;height:1px;background:#dcdcdc;"></div>
<svg style="left:1143px;top:293px" width="14" height="16"><use href="#tabic"/></svg>
<div class="t" style="left:1161px;top:293px;height:17px;line-height:17px;font-size:12px;color:#000;letter-spacing:-0.615px;">AR-001</div>
<svg style="left:1757px;top:291px" width="17" height="17" viewBox="0 0 17 17"><rect x="0.500" y="0.500" width="13" height="14" fill="#fff" stroke="#6e6e6e"/><rect x="0" y="0" width="14" height="2.500" fill="#3b73b9"/><path d="M2 5.500h2M2 8h2M2 10.500h2" stroke="#444" stroke-width="1.200"/><path d="M5 5.500h6M5 8h4M5 10.500h3" stroke="#888" stroke-width="1.200"/><circle cx="12" cy="12" r="4.500" fill="#3aa374"/><path d="M9.500 12h5M12 9.500v5" stroke="#fff" stroke-width="1.300"/></svg>
<div class="t" style="left:1776px;top:291px;height:17px;line-height:17px;font-size:12px;color:#000;letter-spacing:0.287px;">Aggiungi</div>
<svg style="left:1833px;top:291px" width="16" height="16"><use href="#wrench"/></svg>
<div class="t" style="left:1852px;top:291px;height:17px;line-height:17px;font-size:12px;color:#000;letter-spacing:0.072px;">Strumenti</div>
<svg style="left:1910px;top:298px" width="6" height="3"><use href="#dd"/></svg>
<div class="b" style="left:1074px;top:312px;width:829px;height:656px;background:#fff;"></div>
<div class="b" style="left:1110px;top:312px;width:130px;height:1px;background:#e2e2e2;"></div>
<div class="b" style="left:1903px;top:312px;width:16px;height:656px;background:#f0f0f0;"></div>
<div class="b" style="left:1903px;top:329px;width:15px;height:265px;background:#c8c8c8;"></div>
<svg style="left:1906.500px;top:318px" width="8" height="6" viewBox="0 0 8 6"><path d="M0.500 5L4 1.500l3.500 3.500" stroke="#505050" stroke-width="1.900" fill="none"/></svg>
<svg style="left:1906.500px;top:955px" width="8" height="6" viewBox="0 0 8 6"><path d="M0.500 1L4 4.500l3.500-3.500" stroke="#505050" stroke-width="1.900" fill="none"/></svg>
<svg style="left:1078px;top:316px" width="16" height="16"><use href="#qm"/></svg>
<svg style="left:1098px;top:321px" width="9" height="9"><use href="#sminus"/></svg>
<div class="t" style="left:1112px;top:316px;height:18px;line-height:18px;font-size:12px;color:#000;letter-spacing:-0.157px;font-weight:bold;">Stato della macchina | Condizione operativa</div>
<div class="b" style="left:1110px;top:334px;width:793px;height:1px;background:#e2e2e2;"></div>
<svg style="left:1869px;top:318px" width="12" height="11"><use href="#lock"/></svg>
<svg style="left:1888px;top:318px" width="12" height="11"><use href="#prn"/></svg>
<div class="t" style="left:1109.5px;top:335px;height:14px;line-height:14px;font-size:11px;color:#000;letter-spacing:-0.067px;">Durante la fase di carico e scarico le fotocellule poste all'ingresso del tunnel, se intercettate, arrestano ogni movimento pericoloso.</div>
<div class="b" style="left:1110px;top:363px;width:793px;height:107px;background:#e6e6fa;"></div>
<svg style="left:1110px;top:363px;overflow:hidden;background:#101c40" width="160" height="93" viewBox="0 0 160 93"><rect x="-20" y="-20" width="200" height="133" fill="#101c40"/>
<g filter="url(#bl8)">
<ellipse cx="50" cy="12" rx="60" ry="16" fill="#101c48"/>
<ellipse cx="18" cy="34" rx="20" ry="15" fill="#2c64e8"/>
<ellipse cx="42" cy="30" rx="22" ry="10" fill="#2448b0"/>
<ellipse cx="100" cy="35" rx="16" ry="12" fill="#4070dc"/>
<path d="M25 48C45 58 58 80 66 100L36 100C32 80 26 65 10 55z" fill="#5a78c8"/>
<ellipse cx="88" cy="68" rx="30" ry="24" fill="#243f84"/>
<ellipse cx="5" cy="88" rx="18" ry="25" fill="#080806"/>
<ellipse cx="70" cy="0" rx="40" ry="7" fill="#0a1230"/>
</g>
<g filter="url(#bl6)">
<ellipse cx="176" cy="32" rx="46" ry="70" fill="#f2c490"/>
<ellipse cx="122" cy="18" rx="9" ry="24" fill="#7a749c"/>
<ellipse cx="136" cy="102" rx="13" ry="34" fill="#3c5c98" transform="rotate(-12 136 102)"/>
<ellipse cx="166" cy="90" rx="7" ry="20" fill="#e4b47c"/>
</g>
<g filter="url(#bl2)" opacity="0.880">
<circle cx="110" cy="58" r="9" fill="#b4c0c8"/>
<circle cx="117" cy="69" r="11" fill="#c0c8cc"/>
<circle cx="126" cy="81" r="11" fill="#b4c0c4"/>
<circle cx="136" cy="92" r="10" fill="#c4ccc8"/>
</g></svg>
<svg style="left:1279px;top:363px;overflow:hidden;background:#140e0a" width="160" height="93" viewBox="0 0 160 93"><rect x="-20" y="-20" width="200" height="133" fill="#140e0a"/>
<g filter="url(#bl8)">
<ellipse cx="22" cy="28" rx="46" ry="40" fill="#867874"/>
<ellipse cx="-5" cy="55" rx="14" ry="25" fill="#a09494"/>
<ellipse cx="40" cy="16" rx="18" ry="15" fill="#a4885e"/>
<ellipse cx="78" cy="30" rx="22" ry="22" fill="#3a2e28"/>
<ellipse cx="134" cy="42" rx="22" ry="22" fill="#62564e"/>
</g>
<g filter="url(#bl4)">
<ellipse cx="106" cy="40" rx="11" ry="11" fill="#a4927c"/>
<ellipse cx="131" cy="38" rx="13" ry="16" fill="#786c62"/>
</g>
<g filter="url(#bl6)">
<path d="M-10 75C5 55 25 48 50 52C80 50 100 62 120 64C140 70 165 64 175 58L175 110L-10 110z" fill="#0c0806"/>
<rect x="62" y="-12" width="60" height="14" fill="#120c08"/>
<rect x="140" y="-12" width="40" height="26" fill="#0e0a06"/>
</g></svg>
<svg style="left:1450px;top:363px;overflow:hidden;background:#b0c4d0" width="156" height="93" viewBox="0 0 156 93"><rect x="-20" y="-20" width="200" height="133" fill="#b0c4d0"/>
<g filter="url(#bl10)">
<rect x="100" y="-20" width="80" height="140" fill="#6e9eb8"/>
<ellipse cx="150" cy="95" rx="40" ry="30" fill="#3c7090"/>
<ellipse cx="112" cy="28" rx="20" ry="34" fill="#c4e0f4" transform="rotate(-20 112 28)"/>
<ellipse cx="62" cy="6" rx="40" ry="12" fill="#80a4c0"/>
<ellipse cx="20" cy="50" rx="26" ry="22" fill="#b8c6d0"/>
<ellipse cx="65" cy="86" rx="40" ry="16" fill="#a4bccc"/>
<ellipse cx="6" cy="94" rx="32" ry="18" fill="#4c7cb4"/>
</g>
<g filter="url(#bl3)">
<path d="M0 3L22 9L36 16" stroke="#22346c" stroke-width="11" fill="none"/>
<path d="M36 14L58 26L82 38" stroke="#6c94c4" stroke-width="8" fill="none"/>
<path d="M60 22L88 40L84 54L64 68L44 80L26 86" stroke="#6c9ccc" stroke-width="9" fill="none"/>
<path d="M44 44L70 48" stroke="#acd4f2" stroke-width="14" fill="none"/>
<path d="M26 82L52 72" stroke="#dceefc" stroke-width="5" fill="none"/>
<path d="M68 26L88 42L82 56" stroke="#d0e6f8" stroke-width="3" fill="none"/>
</g></svg>
<svg style="left:1616px;top:363px;overflow:hidden;background:#707070" width="160" height="93" viewBox="0 0 160 93"><rect x="-20" y="-20" width="200" height="133" fill="#707070"/>
<g filter="url(#bl3)">
<path d="M-5 -5L60 -5L64 10L40 8L10 12L-5 14z" fill="#d4d4d4"/>
<path d="M-5 14L20 10L16 28L-5 26z" fill="#4a4a4a"/>
<path d="M27 12L46 16L40 35L22 31z" fill="#2a2a2a"/>
<path d="M-5 30L20 32L44 38L42 62L-5 56z" fill="#7c7c7c"/>
<path d="M44 24L56 30L54 60L42 60z" fill="#9a9a9a"/>
<path d="M0 40L16 43" stroke="#e4e4e4" stroke-width="4"/>
<path d="M14 50L34 56L30 64L12 58z" fill="#2c2c2c"/>
<path d="M-5 62L24 66L20 98L-5 98z" fill="#6a6a6a"/>
<path d="M-5 80L8 76L8 98L-5 98z" fill="#b0b0b0"/>
<path d="M28 70L48 64L50 98L26 98z" fill="#c8c8c8"/>
<path d="M58 22L72 26L64 98L48 98z" fill="#2c2c2c"/>
<path d="M62 -5L130 -5L112 12L90 16L74 22z" fill="#222222"/>
<path d="M96 4L124 2L122 18L100 20z" fill="#8a8a8a"/>
<path d="M66 62L84 70L100 98L62 98z" fill="#8c8c8c"/>
<ellipse cx="80" cy="25" rx="10" ry="4.500" fill="#f4f4f4"/>
<path d="M86 28L104 14L122 18L116 50L100 64L84 56z" fill="#444444"/>
<ellipse cx="116" cy="37" rx="6" ry="11" fill="#f0f0f0" transform="rotate(25 116 37)"/>
<path d="M128 19L142 22L149 45L136 58L122 56L126 40z" fill="#fafafa"/>
<path d="M146 8L165 4L165 60L152 48z" fill="#686868"/>
<path d="M138 -5L152 -5L150 6L140 3z" fill="#101010"/>
<path d="M152 -5L165 -5L165 8L154 6z" fill="#b8b8b8"/>
<path d="M76 60C92 76 108 84 126 82C140 80 152 70 165 58L165 76C150 88 130 94 110 92C96 88 86 78 76 66z" fill="#080808"/>
<path d="M100 58L118 64L136 62L124 72L104 70z" fill="#8a8a8a"/>
<path d="M100 92L165 84L165 98L100 98z" fill="#808080"/>
</g></svg>
<div class="t" style="left:1110px;top:455.5px;height:14px;line-height:14px;font-size:10.67px;color:#111;letter-spacing:-0.045px;">Fig. 1: Condizione operativa 1</div>
<div class="t" style="left:1280px;top:454.5px;height:14px;line-height:14px;font-size:10.67px;color:#111;letter-spacing:-0.023px;">Fig. 2: Condfizione operativa 2</div>
<div class="t" style="left:1450.5px;top:455.5px;height:14px;line-height:14px;font-size:10.67px;color:#111;letter-spacing:-0.009px;">Fig. 3: Condizione operativa 3</div>
<div class="t" style="left:1617.5px;top:454.5px;height:14px;line-height:14px;font-size:10.67px;color:#111;letter-spacing:-0.009px;">Fig. 4: Condizione operativa 4</div>
<svg style="left:1078px;top:473px" width="16" height="16"><use href="#qm"/></svg>
<svg style="left:1098px;top:478px" width="9" height="9"><use href="#sminus"/></svg>
<div class="t" style="left:1112px;top:473px;height:18px;line-height:18px;font-size:12px;color:#000;letter-spacing:-0.303px;font-weight:bold;">Situazione pericolosa</div>
<div class="b" style="left:1110px;top:491px;width:793px;height:1px;background:#e2e2e2;"></div>
<svg style="left:1869px;top:475px" width="12" height="11"><use href="#lock"/></svg>
<svg style="left:1888px;top:475px" width="12" height="11"><use href="#prn"/></svg>
<div class="t" style="left:1109.5px;top:492px;height:14px;line-height:14px;font-size:11px;color:#000;letter-spacing:-0.178px;">Inserimento delle mani all'interno della zona di carico/scarico della macchina.</div>
<svg style="left:1111px;top:508px;overflow:hidden;background:#4a6cbc" width="162" height="99" viewBox="0 0 162 99"><rect x="-20" y="-20" width="210" height="140" fill="#4a6cbc"/>
<g filter="url(#bl6)">
<ellipse cx="95" cy="22" rx="50" ry="22" fill="#7898dc"/>
<ellipse cx="70" cy="35" rx="30" ry="16" fill="#a8c0f0"/>
<ellipse cx="108" cy="40" rx="20" ry="11" fill="#2c4888"/>
<ellipse cx="120" cy="70" rx="34" ry="16" fill="#9ab4ec"/>
<path d="M50 52L78 56L72 80L45 94L34 78z" fill="#16244c"/>
<ellipse cx="22" cy="55" rx="20" ry="30" fill="#3454a4"/>
<ellipse cx="105" cy="94" rx="60" ry="10" fill="#4c70c0"/>
<ellipse cx="-4" cy="50" rx="10" ry="60" fill="#02030a"/>
<ellipse cx="10" cy="100" rx="34" ry="13" fill="#03040c"/>
<ellipse cx="168" cy="45" rx="9" ry="50" fill="#101c58"/>
<ellipse cx="150" cy="25" rx="10" ry="22" fill="#3454a8"/>
<ellipse cx="8" cy="6" rx="16" ry="10" fill="#0c1430"/>
</g>
<g filter="url(#bl2)">
<ellipse cx="44" cy="-3" rx="23" ry="16" fill="#ffffff"/>
<path d="M38 12L62 30L72 46L55 44L40 30z" fill="#f4f8ff"/>
<path d="M18 14L42 30" stroke="#b8d0f8" stroke-width="2"/>
<path d="M8 30L32 48" stroke="#d8e4ff" stroke-width="2.500"/>
<path d="M58 16L84 20M64 27L86 33M60 40L80 45" stroke="#e0ecff" stroke-width="3.500"/>
<path d="M128 0L116 24" stroke="#ffffff" stroke-width="6"/>
<path d="M132 24L129 46" stroke="#f0f4ff" stroke-width="4"/>
<path d="M70 55L92 67" stroke="#e8f0ff" stroke-width="4"/>
<ellipse cx="118" cy="72" rx="16" ry="7" fill="#f0f6ff" transform="rotate(-20 118 72)"/>
<ellipse cx="106" cy="60" rx="12" ry="5" fill="#d0e0fc" transform="rotate(-30 106 60)"/>
<path d="M56 82L76 85" stroke="#f4f8ff" stroke-width="3"/>
<path d="M0 81.500L34 81.500" stroke="#f4f4f0" stroke-width="4"/>
<path d="M0 86L34 86" stroke="#3060e0" stroke-width="3"/>
</g><g filter="url(#bl1)"><path d="M91.0 21.1l3.3 -7.6" stroke="#d0e0fc" stroke-width="1.9" opacity="0.76"/><path d="M79.9 15.5l1.1 -4.6" stroke="#b8ccf4" stroke-width="1.1" opacity="0.60"/><path d="M154.6 62.9l3.7 -6.1" stroke="#e8f0ff" stroke-width="1.1" opacity="0.74"/><path d="M87.5 20.6l5.6 -6.4" stroke="#2c4484" stroke-width="1.3" opacity="0.61"/><path d="M123.2 40.4l5.9 -6.8" stroke="#b8ccf4" stroke-width="2.1" opacity="0.54"/><path d="M90.0 58.9l3.2 5.1" stroke="#e8f0ff" stroke-width="2.1" opacity="0.46"/><path d="M116.6 53.7l4.6 4.4" stroke="#ffffff" stroke-width="1.2" opacity="0.54"/><path d="M135.2 21.2l6.1 10.0" stroke="#ffffff" stroke-width="2.2" opacity="0.61"/><path d="M147.3 35.3l6.5 5.7" stroke="#b8ccf4" stroke-width="1.1" opacity="0.39"/><path d="M85.5 68.6l5.2 -8.1" stroke="#2c4484" stroke-width="1.9" opacity="0.66"/><path d="M103.5 70.3l6.5 4.1" stroke="#e8f0ff" stroke-width="2.0" opacity="0.57"/><path d="M80.3 33.0l9.1 -6.8" stroke="#b8ccf4" stroke-width="1.1" opacity="0.55"/><path d="M114.0 84.9l2.7 -5.6" stroke="#b8ccf4" stroke-width="2.6" opacity="0.66"/><path d="M96.8 28.1l3.3 -4.8" stroke="#e8f0ff" stroke-width="1.0" opacity="0.72"/><path d="M76.6 32.5l5.2 -4.6" stroke="#1c2c5c" stroke-width="1.5" opacity="0.41"/><path d="M145.6 90.7l5.4 -9.6" stroke="#2c4484" stroke-width="2.3" opacity="0.53"/><path d="M98.7 17.0l1.0 -4.4" stroke="#e8f0ff" stroke-width="1.7" opacity="0.40"/><path d="M119.3 16.9l9.0 -7.4" stroke="#1c2c5c" stroke-width="1.0" opacity="0.74"/><path d="M120.6 20.9l7.0 5.3" stroke="#b8ccf4" stroke-width="1.2" opacity="0.73"/><path d="M159.3 48.5l2.8 4.3" stroke="#2c4484" stroke-width="1.5" opacity="0.47"/><path d="M142.5 22.0l5.0 -10.5" stroke="#d0e0fc" stroke-width="1.2" opacity="0.59"/><path d="M60.8 53.9l4.2 -4.4" stroke="#d0e0fc" stroke-width="2.5" opacity="0.51"/><path d="M80.7 55.1l6.6 6.0" stroke="#e8f0ff" stroke-width="2.3" opacity="0.72"/><path d="M133.5 27.7l2.3 3.6" stroke="#ffffff" stroke-width="2.3" opacity="0.56"/><path d="M77.8 60.6l8.9 7.3" stroke="#d0e0fc" stroke-width="2.5" opacity="0.51"/><path d="M80.5 27.7l6.2 -4.8" stroke="#1c2c5c" stroke-width="2.3" opacity="0.57"/><path d="M124.6 77.6l3.5 -3.5" stroke="#b8ccf4" stroke-width="2.3" opacity="0.69"/><path d="M106.8 23.5l9.7 6.4" stroke="#2c4484" stroke-width="1.6" opacity="0.53"/><path d="M154.6 71.1l3.6 -2.2" stroke="#1c2c5c" stroke-width="2.4" opacity="0.71"/><path d="M72.9 79.9l3.1 6.0" stroke="#1c2c5c" stroke-width="1.9" opacity="0.36"/><path d="M139.5 71.2l7.4 -8.7" stroke="#b8ccf4" stroke-width="2.6" opacity="0.44"/><path d="M147.1 10.4l4.6 -3.7" stroke="#1c2c5c" stroke-width="1.5" opacity="0.59"/><path d="M143.1 13.3l6.4 6.7" stroke="#1c2c5c" stroke-width="1.7" opacity="0.76"/><path d="M109.2 54.3l6.0 -8.3" stroke="#1c2c5c" stroke-width="1.0" opacity="0.71"/><path d="M75.6 49.2l4.3 -5.0" stroke="#1c2c5c" stroke-width="1.8" opacity="0.57"/><path d="M137.2 84.8l2.7 -5.6" stroke="#ffffff" stroke-width="1.8" opacity="0.60"/><path d="M135.5 87.4l6.4 9.9" stroke="#1c2c5c" stroke-width="1.8" opacity="0.66"/><path d="M104.1 54.4l3.0 5.2" stroke="#1c2c5c" stroke-width="2.4" opacity="0.77"/><path d="M84.5 56.7l4.4 -2.5" stroke="#ffffff" stroke-width="1.6" opacity="0.49"/><path d="M126.5 45.3l8.7 -5.5" stroke="#e8f0ff" stroke-width="2.5" opacity="0.64"/><path d="M95.4 30.0l4.9 -3.1" stroke="#ffffff" stroke-width="1.6" opacity="0.57"/><path d="M159.0 80.4l9.6 -7.1" stroke="#b8ccf4" stroke-width="1.5" opacity="0.44"/><path d="M90.5 70.8l3.5 -6.8" stroke="#2c4484" stroke-width="1.0" opacity="0.50"/><path d="M121.6 52.6l6.3 -9.4" stroke="#e8f0ff" stroke-width="2.6" opacity="0.40"/><path d="M85.1 11.4l3.6 -3.5" stroke="#b8ccf4" stroke-width="2.4" opacity="0.65"/><path d="M154.5 43.3l2.1 4.2" stroke="#ffffff" stroke-width="2.3" opacity="0.43"/></g></svg>
<div class="t" style="left:1113.5px;top:605.5px;height:14px;line-height:14px;font-size:10.67px;color:#111;letter-spacing:-0.030px;">Fig. 5: Situazione pericolosa 1</div>
<svg style="left:1078px;top:623px" width="16" height="16"><use href="#qm"/></svg>
<svg style="left:1098px;top:628px" width="9" height="9"><use href="#sminus"/></svg>
<div class="t" style="left:1112px;top:623px;height:18px;line-height:18px;font-size:12px;color:#000;letter-spacing:-0.295px;font-weight:bold;">Evento pericoloso</div>
<div class="b" style="left:1110px;top:641px;width:793px;height:1px;background:#e2e2e2;"></div>
<svg style="left:1869px;top:625px" width="12" height="11"><use href="#lock"/></svg>
<svg style="left:1888px;top:625px" width="12" height="11"><use href="#prn"/></svg>
<div class="t" style="left:1109.5px;top:642px;height:14px;line-height:14px;font-size:11px;color:#000;letter-spacing:-0.090px;">Malfunzionamento delle fotocellule/disabilitazione da parte dell'operatore.</div>
<svg style="left:1109px;top:659px;overflow:hidden;background:#a07848" width="163" height="98" viewBox="0 0 163 98"><rect x="-20" y="-20" width="210" height="140" fill="#a07848"/>
<g filter="url(#bl8)">
<g transform="rotate(9 80 10)">
<rect x="-30" y="-40" width="240" height="44" fill="#1c0e06"/>
<rect x="-30" y="2" width="120" height="16" fill="#5c2a0c"/>
<rect x="80" y="-2" width="120" height="22" fill="#3c2a18"/>
</g>
<ellipse cx="25" cy="55" rx="45" ry="22" fill="#dc7c1c" transform="rotate(-5 25 55)"/>
<ellipse cx="40" cy="72" rx="45" ry="10" fill="#e09818" transform="rotate(-8 40 72)"/>
<ellipse cx="55" cy="36" rx="30" ry="10" fill="#cc8450" transform="rotate(10 55 36)"/>
<ellipse cx="100" cy="46" rx="40" ry="23" fill="#e6cea6"/>
<ellipse cx="142" cy="57" rx="36" ry="11" fill="#d0d0d2" transform="rotate(4 142 57)"/>
<ellipse cx="138" cy="34" rx="34" ry="9" fill="#8a7050" transform="rotate(10 138 34)"/>
<g transform="rotate(-9 80 90)">
<rect x="-30" y="88" width="240" height="50" fill="#0a0808"/>
<rect x="90" y="70" width="110" height="22" fill="#18222e"/>
<rect x="-30" y="80" width="80" height="12" fill="#4c2c10"/>
<rect x="40" y="78" width="60" height="10" fill="#7c5c30"/>
</g>
</g>
<g filter="url(#bl5)"><rect x="125" y="-12" width="60" height="24" fill="#1c1a14"/><rect x="-10" y="-10" width="40" height="16" fill="#180c06"/></g></svg>
<div class="t" style="left:1111.5px;top:756.5px;height:14px;line-height:14px;font-size:10.67px;color:#111;letter-spacing:-0.042px;">Fig. 6: Evento pericolo 1</div>
<svg style="left:1078px;top:769px" width="16" height="16"><use href="#qm"/></svg>
<svg style="left:1098px;top:774px" width="9" height="9"><use href="#sminus"/></svg>
<div class="t" style="left:1112px;top:769px;height:18px;line-height:18px;font-size:12px;color:#000;letter-spacing:-0.401px;font-weight:bold;">Zona pericolosa</div>
<div class="b" style="left:1110px;top:787px;width:793px;height:1px;background:#e2e2e2;"></div>
<svg style="left:1869px;top:771px" width="12" height="11"><use href="#lock"/></svg>
<svg style="left:1888px;top:771px" width="12" height="11"><use href="#prn"/></svg>
<div class="t" style="left:1109.5px;top:788px;height:14px;line-height:14px;font-size:11px;color:#000;letter-spacing:-0.008px;">All'interno della zona di carico. Il carico del pezzo da lavorare avviene inserendolo all'interno di un tunnel su di un apposito supporto dove verrà prevelato dal</div>
<div class="t" style="left:1109.5px;top:801px;height:14px;line-height:14px;font-size:11px;color:#000;letter-spacing:-0.100px;">braccio di un robot. L'ingresso delle mani dell'operatore intercetta le fotocellule che bloccano i movimenti del robot.</div>
<div class="t" style="left:1361px;top:832.5px;height:14px;line-height:14px;font-size:12px;color:#c4c4c4;letter-spacing:-0.049px;font-style:italic;">Fai doppio click qui per inserire un'immagine allegata...</div>
<svg style="left:1078px;top:854px" width="16" height="16"><use href="#qm"/></svg>
<svg style="left:1098px;top:859px" width="9" height="9"><use href="#sminus"/></svg>
<div class="t" style="left:1112px;top:854px;height:18px;line-height:18px;font-size:12px;color:#000;letter-spacing:-0.207px;font-weight:bold;">Stima del rischio iniziale</div>
<div class="b" style="left:1110px;top:872px;width:793px;height:1px;background:#e2e2e2;"></div>
<svg style="left:1869px;top:856px" width="12" height="11"><use href="#lock"/></svg>
<svg style="left:1888px;top:856px" width="12" height="11"><use href="#prn"/></svg>
<div class="t" style="left:1112px;top:873px;height:14px;line-height:14px;font-size:11px;color:#000;letter-spacing:0.118px;">Se(02) | Fr(03) + Pr(03) + Av(05) = Cl(11): Richieste misure di sicurezza</div>
<div class="t" style="left:1692px;top:873px;height:14px;line-height:14px;font-size:11px;color:#000;letter-spacing:0.002px;">ISO/TR 14121-2:2013 p. 6.5 Metodo ibrido</div>
<div class="b" style="left:1110px;top:887px;width:440px;height:81px;overflow:hidden;"><div class="b" style="left:200px;top:30px;width:36px;height:14px;background:#ffff00;"></div><div class="b" style="left:236px;top:30px;width:36px;height:14px;background:#ff0000;"></div><div class="b" style="left:272px;top:30px;width:36px;height:14px;background:#ff0000;"></div><div class="b" style="left:308px;top:30px;width:36px;height:14px;background:#ff0000;"></div><div class="b" style="left:344px;top:30px;width:36px;height:14px;background:#ff0000;"></div><div class="b" style="left:200px;top:44px;width:36px;height:14px;background:#00ff00;"></div><div class="b" style="left:236px;top:44px;width:36px;height:14px;background:#ffff00;"></div><div class="b" style="left:272px;top:44px;width:36px;height:14px;background:#ff0000;"></div><div class="b" style="left:308px;top:44px;width:36px;height:14px;background:#ff0000;"></div><div class="b" style="left:344px;top:44px;width:36px;height:14px;background:#ff0000;"></div><div class="b" style="left:200px;top:58px;width:36px;height:14px;background:#00ff00;"></div><div class="b" style="left:236px;top:58px;width:36px;height:14px;background:#00ff00;"></div><div class="b" style="left:272px;top:58px;width:36px;height:14px;background:#ffff00;"></div><div class="b" style="left:308px;top:58px;width:36px;height:14px;background:#ff0000;"></div><div class="b" style="left:344px;top:58px;width:36px;height:14px;background:#ff0000;"></div><div class="b" style="left:200px;top:72px;width:36px;height:14px;background:#00ff00;"></div><div class="b" style="left:236px;top:72px;width:36px;height:14px;background:#00ff00;"></div><div class="b" style="left:272px;top:72px;width:36px;height:14px;background:#00ff00;"></div><div class="b" style="left:308px;top:72px;width:36px;height:14px;background:#ffff00;"></div><div class="b" style="left:344px;top:72px;width:36px;height:14px;background:#ff0000;"></div><div class="b" style="left:0px;top:0px;width:433px;height:1px;background:#000;"></div><div class="b" style="left:0px;top:0px;width:1px;height:90px;background:#000;"></div><div class="b" style="left:200px;top:0px;width:1px;height:90px;background:#000;"></div><div class="b" style="left:380px;top:0px;width:1px;height:90px;background:#000;"></div><div class="b" style="left:397px;top:0px;width:1px;height:90px;background:#000;"></div><div class="b" style="left:414px;top:0px;width:1px;height:90px;background:#000;"></div><div class="b" style="left:432px;top:0px;width:1px;height:90px;background:#000;"></div><div class="b" style="left:236px;top:15px;width:1px;height:75px;background:#000;"></div><div class="b" style="left:272px;top:15px;width:1px;height:75px;background:#000;"></div><div class="b" style="left:308px;top:15px;width:1px;height:75px;background:#000;"></div><div class="b" style="left:344px;top:15px;width:1px;height:75px;background:#000;"></div><div class="b" style="left:200px;top:15px;width:181px;height:1px;background:#000;"></div><div class="b" style="left:0px;top:29px;width:433px;height:1px;background:#000;"></div><div class="t" style="left:35.5px;top:3px;height:14px;line-height:14px;font-size:11px;color:#000;letter-spacing:-0.500px;font-family:'DejaVu Sans',sans-serif;font-weight:bold;">Conseguenze / Gravità</div><div class="t" style="left:89.0px;top:15px;height:14px;line-height:14px;font-size:11px;color:#000;letter-spacing:0.305px;">(Se)</div><div class="t" style="left:236px;top:3px;height:14px;line-height:14px;font-size:11px;color:#000;letter-spacing:-0.610px;font-family:'DejaVu Sans',sans-serif;font-weight:bold;">Classe Cl</div><div class="t" style="left:290px;top:3px;height:14px;line-height:14px;font-size:11px;color:#000;letter-spacing:0.281px;">(Fr+Pr+Av)</div><div class="t" style="left:210.6px;top:15px;height:14px;line-height:14px;font-size:11px;color:#000;letter-spacing:0.000px;">3-4</div><div class="t" style="left:246.6px;top:15px;height:14px;line-height:14px;font-size:11px;color:#000;letter-spacing:0.000px;">5-7</div><div class="t" style="left:279.5px;top:15px;height:14px;line-height:14px;font-size:11px;color:#000;letter-spacing:0.000px;">8-10</div><div class="t" style="left:312.8px;top:15px;height:14px;line-height:14px;font-size:11px;color:#000;letter-spacing:0.000px;">11-13</div><div class="t" style="left:348.4px;top:15px;height:14px;line-height:14px;font-size:11px;color:#000;letter-spacing:0.000px;">14-15</div><div class="t" style="left:383.8px;top:15px;height:14px;line-height:14px;font-size:11px;color:#000;letter-spacing:0.000px;">Fr</div><div class="t" style="left:400.5px;top:15px;height:14px;line-height:14px;font-size:11px;color:#000;letter-spacing:0.000px;">Pr</div><div class="t" style="left:417.2px;top:15px;height:14px;line-height:14px;font-size:11px;color:#000;letter-spacing:0.000px;">Av</div><div class="t" style="left:5.5px;top:30px;height:14px;line-height:14px;font-size:11px;color:#000;letter-spacing:-0.773px;">Morte, perdita di un occhio o di un braccio</div><div class="t" style="left:188px;top:30px;height:14px;line-height:14px;font-size:11px;color:#b0b0b0;">4</div><div class="t" style="left:385.9px;top:30px;height:14px;line-height:14px;font-size:11px;color:#b0b0b0;letter-spacing:0.000px;">5</div><div class="t" style="left:402.9px;top:30px;height:14px;line-height:14px;font-size:11px;color:#b0b0b0;letter-spacing:0.000px;">5</div><div class="t" style="left:5.5px;top:44px;height:14px;line-height:14px;font-size:11px;color:#000;letter-spacing:-0.040px;">Permanente, perdita di dita</div><div class="t" style="left:188px;top:44px;height:14px;line-height:14px;font-size:11px;color:#b0b0b0;">3</div><div class="t" style="left:385.9px;top:44px;height:14px;line-height:14px;font-size:11px;color:#b0b0b0;letter-spacing:0.000px;">5</div><div class="t" style="left:402.9px;top:44px;height:14px;line-height:14px;font-size:11px;color:#b0b0b0;letter-spacing:0.000px;">4</div><div class="t" style="left:5.5px;top:58px;height:14px;line-height:14px;font-size:11px;color:#000;letter-spacing:-0.127px;">Reversibile, attenzione medica</div><div class="t" style="left:188px;top:58px;height:14px;line-height:14px;font-size:11px;color:#000;font-family:'DejaVu Sans',sans-serif;font-weight:bold;">2</div><div class="t" style="left:385.9px;top:58px;height:14px;line-height:14px;font-size:11px;color:#b0b0b0;letter-spacing:0.000px;">4</div><div class="t" style="left:402.2px;top:58px;height:14px;line-height:14px;font-size:11px;color:#000;letter-spacing:0.000px;font-family:'DejaVu Sans',sans-serif;font-weight:bold;">3</div><div class="t" style="left:419.7px;top:58px;height:14px;line-height:14px;font-size:11px;color:#000;letter-spacing:0.000px;font-family:'DejaVu Sans',sans-serif;font-weight:bold;">5</div><div class="t" style="left:5.5px;top:72px;height:14px;line-height:14px;font-size:11px;color:#000;letter-spacing:-0.099px;">Reversibile, pronto soccorso</div><div class="t" style="left:188px;top:72px;height:14px;line-height:14px;font-size:11px;color:#b0b0b0;">1</div><div class="t" style="left:385.2px;top:72px;height:14px;line-height:14px;font-size:11px;color:#000;letter-spacing:0.000px;font-family:'DejaVu Sans',sans-serif;font-weight:bold;">3</div><div class="t" style="left:402.9px;top:72px;height:14px;line-height:14px;font-size:11px;color:#b0b0b0;letter-spacing:0.000px;">2</div><div class="t" style="left:420.4px;top:72px;height:14px;line-height:14px;font-size:11px;color:#b0b0b0;letter-spacing:0.000px;">3</div><div class="t" style="left:318.8px;top:58px;height:14px;line-height:14px;font-size:11px;color:#000;letter-spacing:0.000px;font-family:'DejaVu Sans',sans-serif;font-weight:bold;">11</div></div>
<div class="b" style="left:1074px;top:968px;width:846px;height:46px;background:#f5f6f7;"></div>
<svg style="left:1077px;top:972px" width="2" height="36" viewBox="0 0 2 36"><path d="M1 0v36" stroke="#b5b5b5" stroke-width="2" stroke-dasharray="2 2"/></svg>
<svg style="left:1103px;top:971px" width="24" height="24"><use href="#chk24"/></svg>
<div class="t" style="left:1088px;top:995px;height:17px;line-height:17px;font-size:12px;color:#000;letter-spacing:0.164px;">Conforme</div>
<svg style="left:1148px;top:989px" width="6" height="3"><use href="#dd"/></svg>
<svg style="left:1746px;top:971px" width="24" height="24" viewBox="0 0 24 24"><rect x="4.200" y="3.200" width="17.600" height="19.600" rx="2.500" fill="#fff" stroke="#3b73b9" stroke-width="1.800"/><path d="M7.500 1.200v3M11 1.200v3M14.500 1.200v3M18 1.200v3" stroke="#9a9a9a" stroke-width="1.600"/><path d="M8.500 8h10M8.500 10.500h10M10 13h8.500M12.500 15.500h6" stroke="#8a8a8a" stroke-width="0.900"/><path d="M15.500 19.500l1-1 0.800 1.200 0.800-1.800 0.600 1.200h1.300" stroke="#8a8a8a" stroke-width="0.700" fill="none"/><path d="M0.500 11.500l3-2.500 9.500 9.500 1.500 4-4-1z" fill="#3b73b9" stroke="#f5f6f7" stroke-width="1.200"/></svg>
<div class="t" style="left:1723px;top:995px;height:17px;line-height:17px;font-size:12px;color:#000;letter-spacing:-0.040px;">Firma tecnico</div>
<svg style="left:1801px;top:989px" width="6" height="3"><use href="#dd"/></svg>
<svg style="left:1847px;top:970px" width="24" height="25" viewBox="0 0 24 25"><rect x="0.500" y="3.500" width="23" height="21" fill="#fff" stroke="#6e6e6e"/><rect x="0" y="3" width="24" height="5" fill="#3b73b9"/><rect x="5" y="1" width="2" height="4.500" fill="#6e6e6e"/><rect x="17" y="1" width="2" height="4.500" fill="#6e6e6e"/><path d="M9.500 10.500H20.500V22.500H3.500V14.500H9.500zM9.500 14.500H20.500M3.500 18.500H20.500M9.500 14.500V22.500M15 10.500V22.500" stroke="#8a8a8a" stroke-width="1" fill="none"/></svg>
<div class="t" style="left:1815.5px;top:995px;height:17px;line-height:17px;font-size:12px;color:#000;letter-spacing:-0.230px;">Data: 11/01/2018</div>
<svg style="left:1909px;top:989px" width="6" height="3"><use href="#dd"/></svg>
<div class="b" style="left:1919px;top:120px;width:1px;height:895px;background:#a0a0a0;"></div>
<div class="b" style="left:0px;top:1014px;width:518px;height:1px;background:#f5f6f7;"></div>
<div class="b" style="left:518px;top:1014px;width:1402px;height:1px;background:#8a8a8a;"></div>
<div class="b" style="left:0px;top:1015px;width:1920px;height:25px;background:#f5f6f7;"></div>
<div class="b" style="left:1589px;top:1018px;width:1px;height:19px;background:#8a8a8a;"></div>
<div class="b" style="left:1696px;top:1018px;width:1px;height:19px;background:#8a8a8a;"></div>
<div class="b" style="left:1816px;top:1018px;width:1px;height:19px;background:#8a8a8a;"></div>
<div class="b" style="left:1876px;top:1018px;width:1px;height:19px;background:#8a8a8a;"></div>
<svg style="left:1591px;top:1020px" width="14" height="17" viewBox="0 0 14 17"><path d="M3 10l-2 6.500 3-1.500 1.500 2 1.500-5zM11 10l2 6.500-3-1.500-1.500 2-1.500-5z" fill="#d85a2a"/><circle cx="7" cy="6.500" r="6.200" fill="#e8743e" stroke="#e8743e" stroke-width="1.200" stroke-dasharray="1.600 1"/><circle cx="7" cy="6.500" r="4" fill="#d65220"/></svg>
<div class="t" style="left:1609px;top:1018.5px;height:18px;line-height:18px;font-size:12px;color:#000;letter-spacing:-0.248px;">Dir. 2006/42/CE</div>
<svg style="left:1699px;top:1021px" width="15" height="15" viewBox="0 0 15 15"><circle cx="7.500" cy="4" r="3.800" fill="#9c2626"/><path d="M0.500 15c0-5 3-7 7-7s7 2 7 7z" fill="#9c2626"/></svg>
<div class="t" style="left:1718px;top:1018.5px;height:18px;line-height:18px;font-size:12px;color:#000;letter-spacing:0.165px;">Amministratore</div>
<svg style="left:1807px;top:1027px" width="6" height="3"><use href="#dd"/></svg>
<svg style="left:1816.500px;top:1019px" width="17" height="17" viewBox="0 0 17 17"><g fill="none" stroke="#2f76c0" stroke-width="2.100" transform="rotate(-45 8.500 8.500)"><rect x="-1.500" y="5.400" width="10.500" height="6.200" rx="3.100"/><rect x="8" y="5.400" width="10.500" height="6.200" rx="3.100"/><path d="M5.500 8.500h6" stroke-width="2"/></g></svg>
<div class="t" style="left:1836.5px;top:1018.5px;height:18px;line-height:18px;font-size:12px;color:#000;letter-spacing:-0.036px;">cemfu</div>
<svg style="left:1880px;top:1021px" width="14" height="14" viewBox="0 0 14 14"><circle cx="7" cy="7" r="7" fill="#3b73b9"/><text x="7" y="9.700" font-size="7.500" text-anchor="middle" fill="#fff" font-family="Liberation Serif, serif">IT</text></svg>
<svg style="left:1897px;top:1027px" width="6" height="3"><use href="#dd"/></svg>
</body></html>
